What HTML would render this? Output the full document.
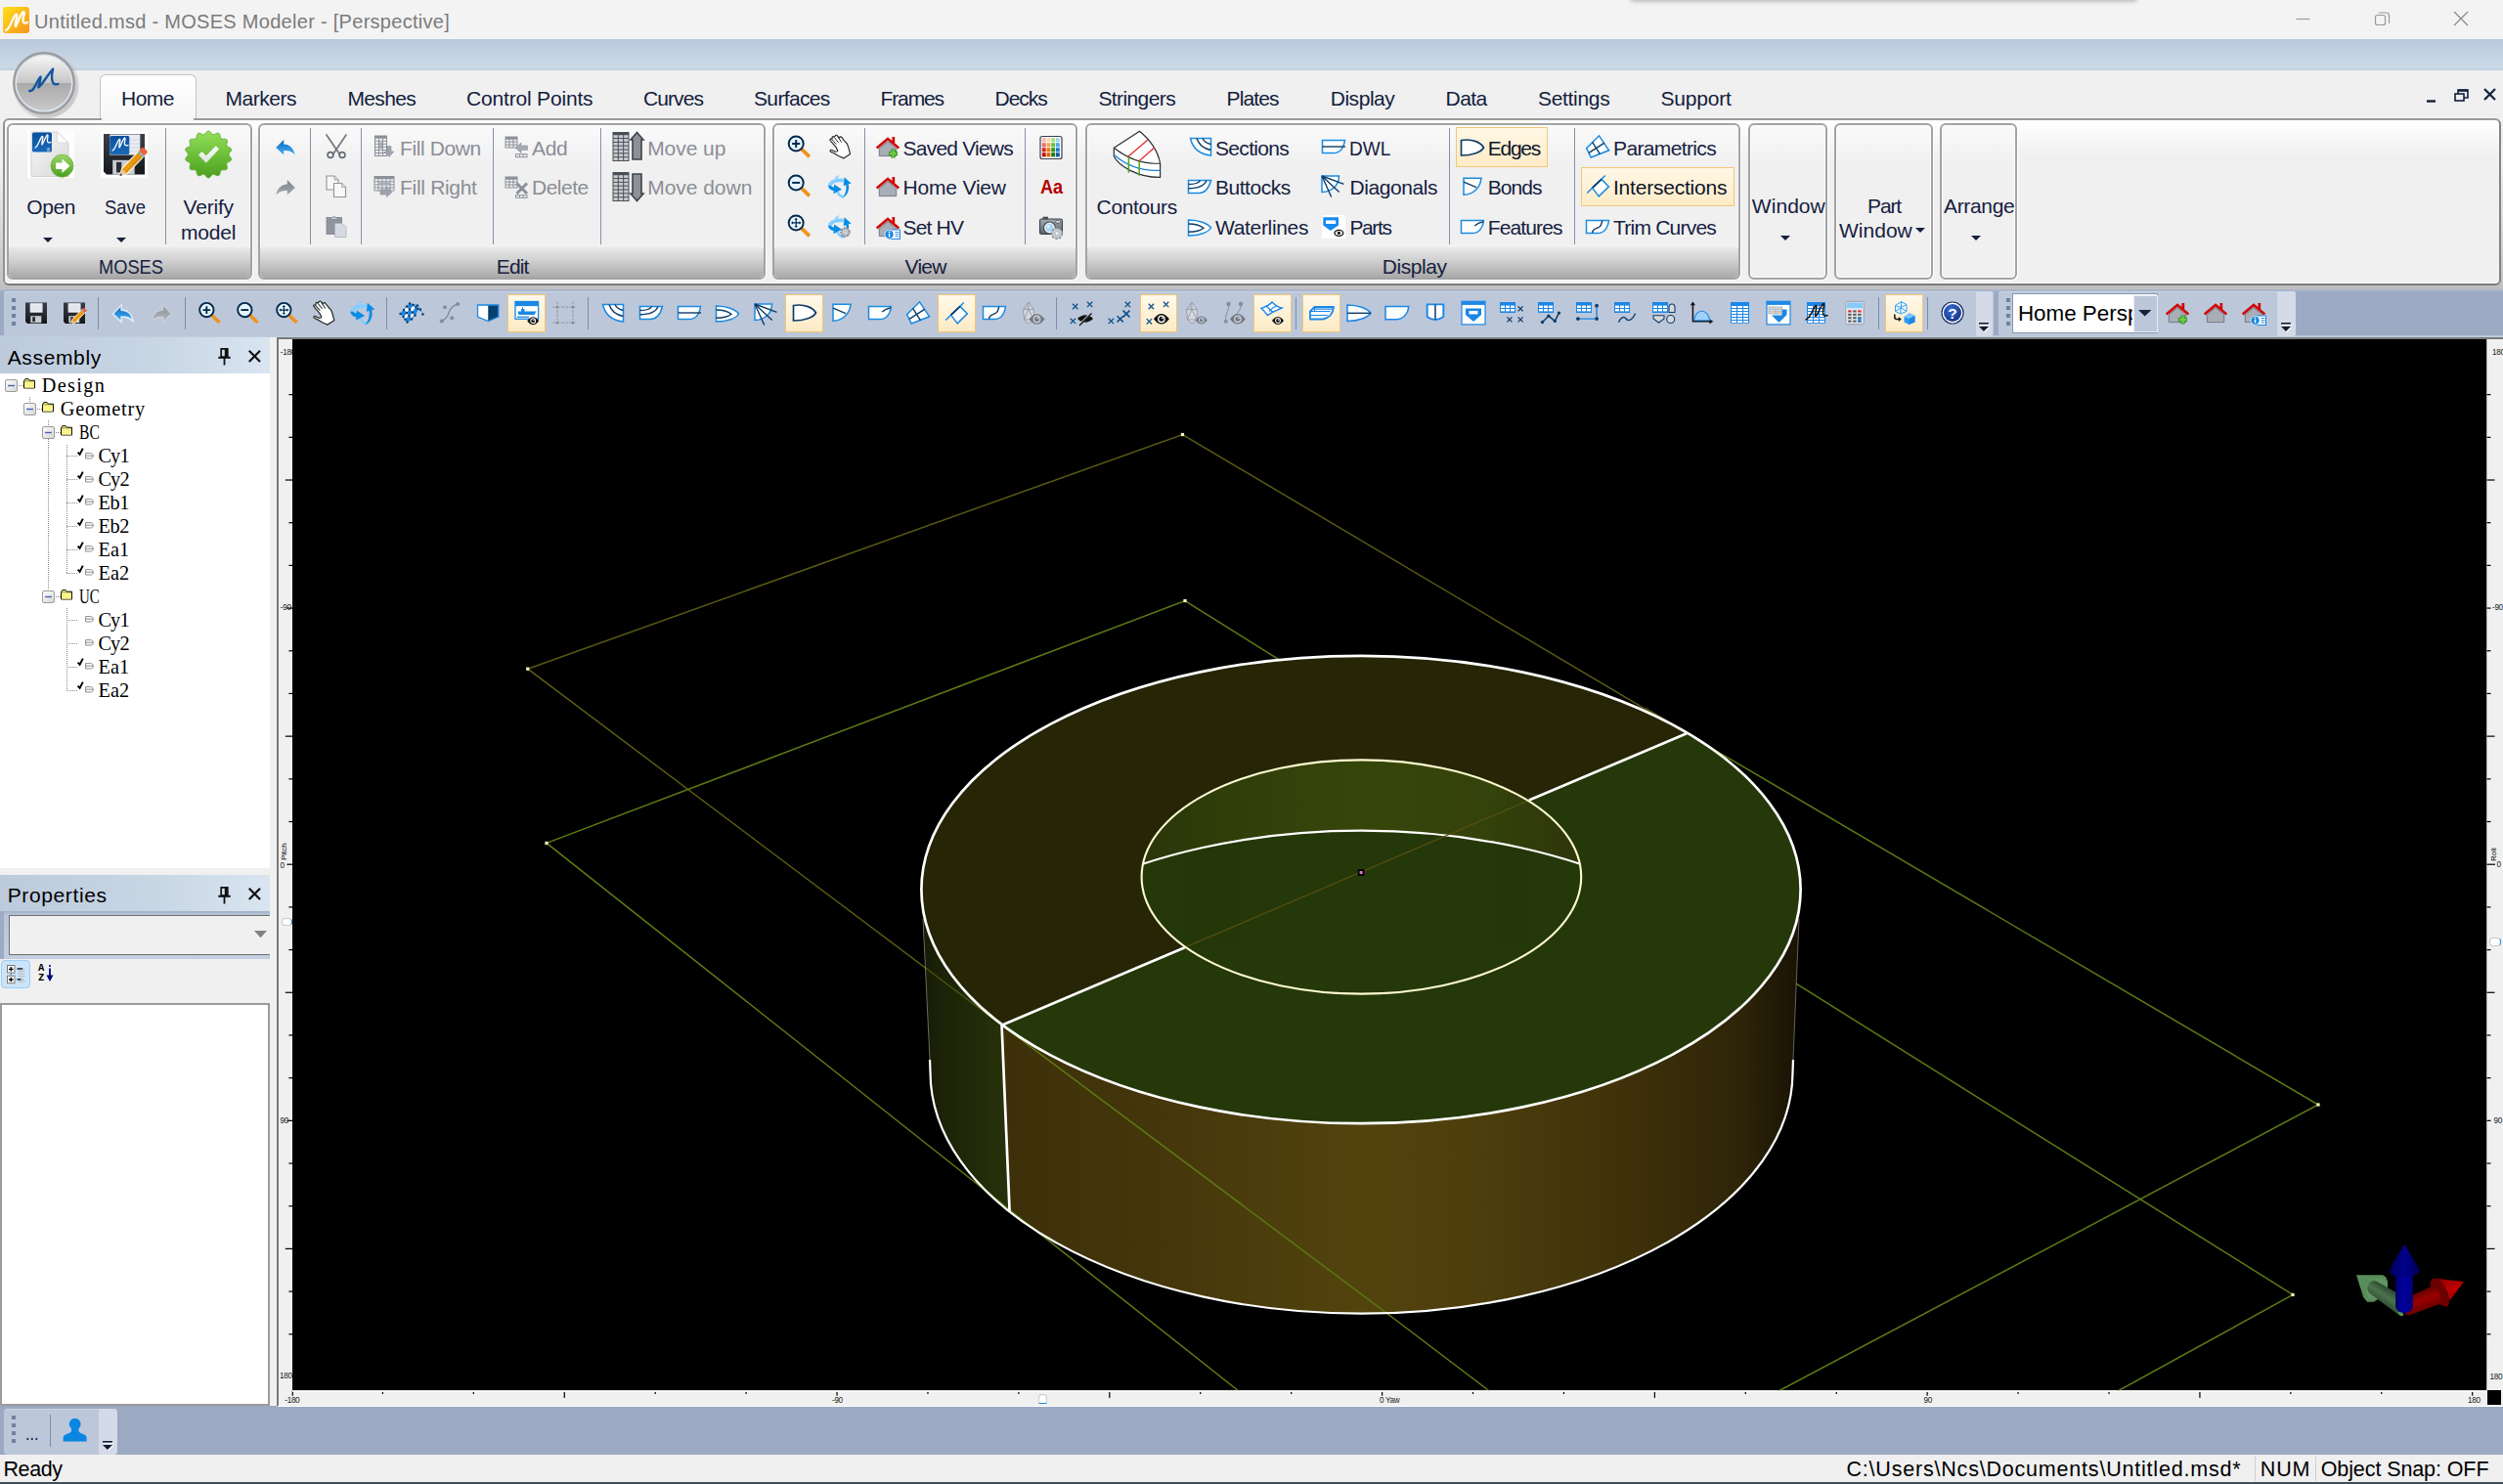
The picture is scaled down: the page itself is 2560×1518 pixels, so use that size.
<!DOCTYPE html>
<html><head><meta charset="utf-8"><title>Untitled.msd - MOSES Modeler - [Perspective]</title>
<style>
html,body{margin:0;padding:0}
html{overflow:hidden}
body{width:2560px;height:1518px;position:relative;overflow:hidden;background:#f0f0f0;font-family:"Liberation Sans",sans-serif}
.t{position:absolute;white-space:pre;display:block}
svg{overflow:visible}
</style></head><body>
<div style="position:absolute;left:0px;top:0px;width:2560px;height:40px;background:#f3f3f3"></div>
<svg style="position:absolute;left:3px;top:7px;" width="27" height="27" viewBox="0 0 27 27"><defs><linearGradient id="gico" x1="0" y1="0" x2="1" y2="1"><stop offset="0" stop-color="#ffe11a"/><stop offset="1" stop-color="#f7941d"/></linearGradient></defs>
<rect x="0" y="0" width="27" height="27" rx="3" fill="url(#gico)"/>
<path d="M3 24 C8 22 9 12 13 8 C14 7 15 8 14 11 C13 15 12 19 13 20 C15 18 17 8 21 5 C22 5 22 7 21 10 C20 14 20 18 25 16" fill="none" stroke="#fff" stroke-width="2.2" stroke-linecap="round"/></svg>
<span class="t" style="left:35.00px;top:11.67px;font-size:20px;line-height:20px;color:#7b7b7b;letter-spacing:0.290px;">Untitled.msd - MOSES Modeler - [Perspective]</span>
<div style="position:absolute;left:1668px;top:-12px;width:517px;height:12px;box-shadow:0 1px 5px rgba(0,0,0,.3)"></div>
<svg style="position:absolute;left:2340px;top:0px;" width="220" height="40" viewBox="0 0 220 40"><path d="M8.5 19.5h14" stroke="#9a9a9a" stroke-width="1.2" fill="none"/>
<rect x="89.5" y="15.5" width="10" height="10" rx="2" fill="none" stroke="#9a9a9a" stroke-width="1.2"/><path d="M92.5 13 h8 a3 3 0 0 1 3 3 v8" fill="none" stroke="#9a9a9a" stroke-width="1.2"/>
<path d="M170 12 l14 14 M184 12 l-14 14" stroke="#8a8a8a" stroke-width="1.3" fill="none"/></svg>
<div style="position:absolute;left:0px;top:40px;width:2560px;height:32.5px;background:linear-gradient(#b9c8db,#ccd9e7 88%,#b9c9dc)"></div>
<div style="position:absolute;left:0px;top:72px;width:2560px;height:49px;background:#f0f0f0"></div>
<div style="position:absolute;left:102px;top:76px;width:97px;height:46px;background:linear-gradient(#ffffff,#f6f6f6);border:1.5px solid #c4c4c4;border-bottom:none;border-radius:6px 6px 0 0"></div>
<span class="t" style="left:124.00px;top:90.22px;font-size:21px;line-height:21px;color:#12203c;letter-spacing:-0.491px;">Home</span>
<span class="t" style="left:230.60px;top:90.22px;font-size:21px;line-height:21px;color:#12203c;letter-spacing:-0.499px;">Markers</span>
<span class="t" style="left:355.40px;top:90.22px;font-size:21px;line-height:21px;color:#12203c;letter-spacing:-0.624px;">Meshes</span>
<span class="t" style="left:477.00px;top:90.22px;font-size:21px;line-height:21px;color:#12203c;letter-spacing:-0.178px;">Control Points</span>
<span class="t" style="left:658.00px;top:90.22px;font-size:21px;line-height:21px;color:#12203c;letter-spacing:-0.913px;">Curves</span>
<span class="t" style="left:771.00px;top:90.22px;font-size:21px;line-height:21px;color:#12203c;letter-spacing:-0.650px;">Surfaces</span>
<span class="t" style="left:900.50px;top:90.22px;font-size:21px;line-height:21px;color:#12203c;letter-spacing:-1.123px;">Frames</span>
<span class="t" style="left:1017.60px;top:90.22px;font-size:21px;line-height:21px;color:#12203c;letter-spacing:-1.032px;">Decks</span>
<span class="t" style="left:1123.40px;top:90.22px;font-size:21px;line-height:21px;color:#12203c;letter-spacing:-0.592px;">Stringers</span>
<span class="t" style="left:1254.60px;top:90.22px;font-size:21px;line-height:21px;color:#12203c;letter-spacing:-0.867px;">Plates</span>
<span class="t" style="left:1360.70px;top:90.22px;font-size:21px;line-height:21px;color:#12203c;letter-spacing:-0.455px;">Display</span>
<span class="t" style="left:1478.60px;top:90.22px;font-size:21px;line-height:21px;color:#12203c;letter-spacing:-0.560px;">Data</span>
<span class="t" style="left:1573.00px;top:90.22px;font-size:21px;line-height:21px;color:#12203c;letter-spacing:-0.317px;">Settings</span>
<span class="t" style="left:1698.50px;top:90.22px;font-size:21px;line-height:21px;color:#12203c;letter-spacing:-0.193px;">Support</span>
<svg style="position:absolute;left:2470px;top:85px;" width="90" height="30" viewBox="0 0 90 30"><path d="M12 18.5h9" stroke="#12203c" stroke-width="2.4"/>
<rect x="41" y="11" width="9" height="7" fill="none" stroke="#12203c" stroke-width="1.6"/><path d="M44 11v-4h10v8h-4" fill="none" stroke="#12203c" stroke-width="1.6"/><path d="M44 7.6h10" stroke="#12203c" stroke-width="2.4"/>
<path d="M71 6l11 11M82 6l-11 11" stroke="#12203c" stroke-width="2.2"/></svg>
<svg style="position:absolute;left:9.299999999999997px;top:48.8px;" width="72" height="72" viewBox="0 0 72 72"><defs><linearGradient id="gab" x1="0" y1="0" x2="0" y2="1"><stop offset="0" stop-color="#f6f6f6"/><stop offset="0.5" stop-color="#c6c6c6"/><stop offset="0.5" stop-color="#a9a9a9"/><stop offset="1" stop-color="#c9c9c9"/></linearGradient>
<radialGradient id="gab2" cx="0.53" cy="0.54" r="0.5"><stop offset="0.86" stop-color="#000" stop-opacity="0.16"/><stop offset="1" stop-color="#000" stop-opacity="0"/></radialGradient></defs>
<circle cx="37" cy="37.5" r="35" fill="url(#gab2)"/>
<circle cx="36" cy="36" r="30.8" fill="#d9e2f1" stroke="#9c9c9c" stroke-width="2.4"/>
<circle cx="36" cy="36" r="28" fill="url(#gab)"/>
<g transform="translate(36,36)"><path d="M-14.9 7.9 C-10 9.5 -8 -2 -3.5 -6.5 C-3 -3 -5.5 1.5 -5.7 4.4 C-2 2 4 -9 9.2 -14.5 C7.5 -8 6.5 3.5 14.5 0.9" fill="none" stroke="#14569e" stroke-width="2.4" stroke-linecap="round" stroke-linejoin="round"/></g></svg>
<div style="position:absolute;left:0px;top:121px;width:2560px;height:175px;background:linear-gradient(#f0f0f0 0,#f0f0f0 50px,#c0c0c0 100%)"></div>
<div style="position:absolute;left:2.6px;top:121px;width:2551.4px;height:167px;border:2px solid #9a9a9a;border-color:#9a9a9a #838383 #7b7b7b #929292;border-radius:6px;background:linear-gradient(#ffffff 0px,#f0f0f0 38px,#f0f0f0);box-shadow:inset 0 -1.2px 0 #fff"></div>
<div style="position:absolute;left:103.5px;top:119px;width:94px;height:5px;background:#f6f6f6"></div>
<div style="position:absolute;left:7px;top:126px;width:247px;height:155.5px;border:2px solid #a3a3a3;border-radius:6px;background:linear-gradient(#fafafa 0px,#f0f0f0 40px,#f0f0f0);box-shadow:inset 0 0 0 1px rgba(255,255,255,.8), 1px 1px 0 rgba(255,255,255,.9);overflow:hidden"><div style="position:absolute;left:0;right:0;bottom:0;height:31px;background:linear-gradient(#e9e9e9,#cfcfcf 45%,#a9a9a9);border-radius:0 0 4px 4px"></div></div>
<span class="t" style="left:101.00px;top:261.72px;font-size:21px;line-height:21px;color:#16213f;transform-origin:0 0;transform:scaleX(0.8701);">MOSES</span>
<div style="position:absolute;left:264px;top:126px;width:515px;height:155.5px;border:2px solid #a3a3a3;border-radius:6px;background:linear-gradient(#fafafa 0px,#f0f0f0 40px,#f0f0f0);box-shadow:inset 0 0 0 1px rgba(255,255,255,.8), 1px 1px 0 rgba(255,255,255,.9);overflow:hidden"><div style="position:absolute;left:0;right:0;bottom:0;height:31px;background:linear-gradient(#e9e9e9,#cfcfcf 45%,#a9a9a9);border-radius:0 0 4px 4px"></div></div>
<span class="t" style="left:507.80px;top:261.72px;font-size:21px;line-height:21px;color:#16213f;letter-spacing:-0.854px;">Edit</span>
<div style="position:absolute;left:790px;top:126px;width:308px;height:155.5px;border:2px solid #a3a3a3;border-radius:6px;background:linear-gradient(#fafafa 0px,#f0f0f0 40px,#f0f0f0);box-shadow:inset 0 0 0 1px rgba(255,255,255,.8), 1px 1px 0 rgba(255,255,255,.9);overflow:hidden"><div style="position:absolute;left:0;right:0;bottom:0;height:31px;background:linear-gradient(#e9e9e9,#cfcfcf 45%,#a9a9a9);border-radius:0 0 4px 4px"></div></div>
<span class="t" style="left:925.60px;top:261.72px;font-size:21px;line-height:21px;color:#16213f;letter-spacing:-0.783px;">View</span>
<div style="position:absolute;left:1110px;top:126px;width:666px;height:155.5px;border:2px solid #a3a3a3;border-radius:6px;background:linear-gradient(#fafafa 0px,#f0f0f0 40px,#f0f0f0);box-shadow:inset 0 0 0 1px rgba(255,255,255,.8), 1px 1px 0 rgba(255,255,255,.9);overflow:hidden"><div style="position:absolute;left:0;right:0;bottom:0;height:31px;background:linear-gradient(#e9e9e9,#cfcfcf 45%,#a9a9a9);border-radius:0 0 4px 4px"></div></div>
<span class="t" style="left:1413.80px;top:261.72px;font-size:21px;line-height:21px;color:#16213f;letter-spacing:-0.455px;">Display</span>
<div style="position:absolute;left:1788px;top:126px;width:77px;height:155.5px;border:2px solid #a3a3a3;border-radius:6px;background:linear-gradient(#fafafa 0px,#f0f0f0 40px,#f0f0f0);box-shadow:inset 0 0 0 1px rgba(255,255,255,.8), 1px 1px 0 rgba(255,255,255,.9);overflow:hidden"></div>
<div style="position:absolute;left:1876px;top:126px;width:97px;height:155.5px;border:2px solid #a3a3a3;border-radius:6px;background:linear-gradient(#fafafa 0px,#f0f0f0 40px,#f0f0f0);box-shadow:inset 0 0 0 1px rgba(255,255,255,.8), 1px 1px 0 rgba(255,255,255,.9);overflow:hidden"></div>
<div style="position:absolute;left:1984px;top:126px;width:75px;height:155.5px;border:2px solid #a3a3a3;border-radius:6px;background:linear-gradient(#fafafa 0px,#f0f0f0 40px,#f0f0f0);box-shadow:inset 0 0 0 1px rgba(255,255,255,.8), 1px 1px 0 rgba(255,255,255,.9);overflow:hidden"></div>
<div style="position:absolute;left:168.8px;top:130.5px;width:1.4px;height:119.0px;background:#8491a8"></div>
<div style="position:absolute;left:316.8px;top:130.5px;width:1.4px;height:119.0px;background:#8491a8"></div>
<div style="position:absolute;left:368.7px;top:130.5px;width:1.4px;height:119.0px;background:#8491a8"></div>
<div style="position:absolute;left:503.8px;top:130.5px;width:1.4px;height:119.0px;background:#8491a8"></div>
<div style="position:absolute;left:613.6999999999999px;top:130.5px;width:1.4px;height:119.0px;background:#8491a8"></div>
<div style="position:absolute;left:883.6999999999999px;top:130.5px;width:1.4px;height:119.0px;background:#8491a8"></div>
<div style="position:absolute;left:1047.7px;top:130.5px;width:1.4px;height:119.0px;background:#8491a8"></div>
<div style="position:absolute;left:1482.0px;top:130.5px;width:1.4px;height:119.0px;background:#8491a8"></div>
<div style="position:absolute;left:1609.7px;top:130.5px;width:1.4px;height:119.0px;background:#8491a8"></div>
<svg style="position:absolute;left:28px;top:134px;" width="48" height="48" viewBox="0 0 48 48"><defs><linearGradient id="gpg" x1="0" y1="0" x2="1" y2="1"><stop offset="0" stop-color="#f6f6f6"/><stop offset="1" stop-color="#d9d9d9"/></linearGradient>
<linearGradient id="gbl" x1="0" y1="0" x2="0" y2="1"><stop offset="0" stop-color="#0a4f9c"/><stop offset="1" stop-color="#1a6ab8"/></linearGradient>
<linearGradient id="ggr" x1="0" y1="0" x2="0" y2="1"><stop offset="0" stop-color="#9ad66a"/><stop offset="1" stop-color="#4c9f1e"/></linearGradient></defs>
<rect width="48" height="48" fill="#fdfdfd"/>
<path d="M4 1 H30.5 L42 12 V46.5 H4Z" fill="url(#gpg)" stroke="#c9c9c9" stroke-width="0.8"/><path d="M30.5 1 V12 H42Z" fill="#fbfbfb" stroke="#d0d0d0" stroke-width="0.6"/>
<rect x="5" y="1.5" width="20" height="20" rx="1.5" fill="url(#gbl)"/>
<path d="M8 17 C11 16 12.5 8 15 5.5 C16 5 16 6.5 15.5 8.5 C15 11 14.5 13.5 15 14 C16.5 13 18 6 20.5 4 C21.3 4 21 5.8 20.6 7.5 C20 10.5 20.5 13 24 11.5" fill="none" stroke="#fff" stroke-width="1.3" stroke-linecap="round"/><text x="20" y="20.5" font-size="5" fill="#cfe0f2" font-family="Liberation Sans,sans-serif">8</text>
<circle cx="35.5" cy="35.7" r="11.5" fill="url(#ggr)" stroke="#6fb544" stroke-width="0.8"/>
<path d="M29 32.5 H35.5 V28.5 L43.5 35.7 L35.5 43 V39 H29Z" fill="#fff"/></svg>
<span class="t" style="left:27.20px;top:200.82px;font-size:21px;line-height:21px;color:#16213f;letter-spacing:-0.364px;">Open</span>
<svg style="position:absolute;left:44.2px;top:242.7px;" width="10" height="5" viewBox="0 0 10 5"><path d="M0 0 H10 L5.0 5Z" fill="#16213f"/></svg>
<svg style="position:absolute;left:103px;top:134px;" width="48" height="48" viewBox="0 0 48 48"><defs><linearGradient id="gfl" x1="0" y1="0" x2="0" y2="1"><stop offset="0" stop-color="#3c404a"/><stop offset="1" stop-color="#15171c"/></linearGradient>
<linearGradient id="gpn" x1="0" y1="0" x2="1" y2="1"><stop offset="0" stop-color="#f8b822"/><stop offset="1" stop-color="#e08a0a"/></linearGradient></defs>
<rect width="48" height="48" fill="#fdfdfd"/>
<path d="M3 3 H45 V44.5 H6 L3 41.5Z" fill="url(#gfl)"/>
<rect x="9.3" y="3.5" width="31" height="21" fill="#e9ebf2"/><path d="M9.3 9h31M9.3 13h31M9.3 17h31M9.3 21h31" stroke="#d3d7e2" stroke-width="1"/>
<rect x="9.3" y="4.9" width="20" height="19.2" rx="1.5" fill="url(#gbl)"/>
<path d="M12 20 C15 19 16.5 11 19 8.5 C20 8 20 9.5 19.5 11.5 C19 14 18.5 16.5 19 17 C20.5 16 22 9 24.5 7 C25.3 7 25 8.8 24.6 10.5 C24 13.5 24.5 16 28 14.5" fill="none" stroke="#fff" stroke-width="1.3" stroke-linecap="round"/>
<rect x="12.2" y="29.8" width="22.5" height="14.7" fill="#c9cbd0"/><rect x="16" y="31.8" width="5.3" height="10.6" fill="#2b2e35"/>
<g transform="translate(19.4,46.1) rotate(-46)"><path d="M0 0 L7 -3.8 H33 V3.8 H7Z" fill="url(#gpn)" stroke="#fff" stroke-width="1"/><path d="M0 0 L7 -3.8 V3.8Z" fill="#e8c9a0"/><path d="M0 0 L2.6 -1.4 V1.4Z" fill="#333"/><rect x="30" y="-3.8" width="2.5" height="7.6" fill="#9aa"/><path d="M32.5 -3.8 H36 a2 2 0 0 1 2 2 V1.8 a2 2 0 0 1 -2 2 H32.5Z" fill="#e8643c"/><path d="M7 -1.2 H30 M7 1.4 H30" stroke="#c97a08" stroke-width="0.8"/></g></svg>
<span class="t" style="left:106.60px;top:200.82px;font-size:21px;line-height:21px;color:#16213f;transform-origin:0 0;transform:scaleX(0.8774);">Save</span>
<svg style="position:absolute;left:119.0px;top:242.7px;" width="10" height="5" viewBox="0 0 10 5"><path d="M0 0 H10 L5.0 5Z" fill="#16213f"/></svg>
<svg style="position:absolute;left:188.7px;top:134px;" width="48.5" height="48" viewBox="0 0 48.5 48"><defs><linearGradient id="gvf" x1="0" y1="0" x2="0" y2="1"><stop offset="0" stop-color="#93e05a"/><stop offset="1" stop-color="#4a9f1c"/></linearGradient><linearGradient id="gck" x1="0" y1="0" x2="0" y2="1"><stop offset="0" stop-color="#ffffff"/><stop offset="1" stop-color="#d9e4dc"/></linearGradient></defs>
<polygon points="24.20,-0.10 25.52,0.44 26.71,1.74 27.75,3.10 28.81,3.82 30.07,3.63 31.60,2.86 33.23,2.19 34.66,2.29 35.62,3.34 36.12,5.03 36.47,6.71 37.11,7.82 38.33,8.19 40.04,8.16 41.80,8.27 43.04,8.97 43.45,10.34 43.17,12.08 42.75,13.75 42.85,15.02 43.78,15.89 45.34,16.60 46.88,17.47 47.70,18.64 47.47,20.05 46.46,21.49 45.36,22.81 44.90,24.00 45.36,25.19 46.46,26.51 47.47,27.95 47.70,29.36 46.88,30.53 45.34,31.40 43.78,32.11 42.85,32.98 42.75,34.25 43.17,35.92 43.45,37.66 43.04,39.03 41.80,39.73 40.04,39.84 38.33,39.81 37.11,40.18 36.47,41.29 36.12,42.97 35.62,44.66 34.66,45.71 33.23,45.81 31.60,45.14 30.07,44.37 28.81,44.18 27.75,44.90 26.71,46.26 25.52,47.56 24.20,48.10 22.88,47.56 21.69,46.26 20.65,44.90 19.59,44.18 18.33,44.37 16.80,45.14 15.17,45.81 13.74,45.71 12.78,44.66 12.28,42.97 11.93,41.29 11.29,40.18 10.07,39.81 8.36,39.84 6.60,39.73 5.36,39.03 4.95,37.66 5.23,35.92 5.65,34.25 5.55,32.98 4.62,32.11 3.06,31.40 1.52,30.53 0.70,29.36 0.93,27.95 1.94,26.51 3.04,25.19 3.50,24.00 3.04,22.81 1.94,21.49 0.93,20.05 0.70,18.64 1.52,17.47 3.06,16.60 4.62,15.89 5.55,15.02 5.65,13.75 5.23,12.08 4.95,10.34 5.36,8.97 6.60,8.27 8.36,8.16 10.07,8.19 11.29,7.82 11.93,6.71 12.28,5.03 12.78,3.34 13.74,2.29 15.17,2.19 16.80,2.86 18.33,3.63 19.59,3.82 20.65,3.10 21.69,1.74 22.88,0.44" fill="url(#gvf)" stroke="#5aa832" stroke-width="0.8"/>
<path d="M14 24.5 L17.5 21 L21.8 25.3 L31.8 15.2 L35 18.4 L21.8 32.8Z" fill="url(#gck)"/></svg>
<span class="t" style="left:187.60px;top:200.82px;font-size:21px;line-height:21px;color:#16213f;letter-spacing:-0.204px;">Verify</span>
<span class="t" style="left:185.00px;top:227.02px;font-size:21px;line-height:21px;color:#16213f;letter-spacing:-0.177px;">model</span>
<svg style="position:absolute;left:277.3px;top:135.5px;" width="30" height="30" viewBox="0 0 30 30"><g transform="translate(15.0,15.0) scale(1.0)"><defs><linearGradient id="gu" x1="0" y1="0" x2="0" y2="1"><stop offset="0" stop-color="#0a63c0"/><stop offset="1" stop-color="#45b5f7"/></linearGradient></defs><path d="M-9.8 0 L-1.8 -8 L-1.8 -3.6 C4 -3.6 8.5 0.5 9.6 7.5 C6.5 3.5 3 2.6 -1.8 3 L-1.8 7.6Z" fill="url(#gu)"/></g></svg>
<svg style="position:absolute;left:276.6px;top:176.8px;" width="30" height="30" viewBox="0 0 30 30"><g transform="translate(15.0,15.0) scale(1.0)"><g transform="scale(-1,1)"><defs><linearGradient id="gr_" x1="0" y1="0" x2="0" y2="1"><stop offset="0" stop-color="#7e838e"/><stop offset="1" stop-color="#a4a8b0"/></linearGradient></defs><path d="M-9.8 0 L-1.8 -8 L-1.8 -3.6 C4 -3.6 8.5 0.5 9.6 7.5 C6.5 3.5 3 2.6 -1.8 3 L-1.8 7.6Z" fill="url(#gr_)"/></g></g></svg>
<svg style="position:absolute;left:328.5px;top:135.0px;" width="30" height="30" viewBox="0 0 30 30"><g transform="translate(15.0,15.0) scale(1.0)"><path d="M-10 -12 L3.5 8 M10 -12 L-3.5 8" stroke="#767c86" stroke-width="1.8" stroke-linecap="round"/><circle cx="-6" cy="8.5" r="2.9" fill="none" stroke="#666c76" stroke-width="1.7"/><circle cx="6" cy="8.5" r="2.9" fill="none" stroke="#666c76" stroke-width="1.7"/></g></svg>
<svg style="position:absolute;left:329.0px;top:176.0px;" width="30" height="30" viewBox="0 0 30 30"><g transform="translate(15.0,15.0) scale(1.0)"><g transform="translate(-10,-11)"><path d="M0 0 H8 L12 4 V14 H0Z" fill="#f8f8f8" stroke="#8f949c" stroke-width="1.1"/><path d="M8 0 V4 H12" fill="#ddd" stroke="#9a9ea6" stroke-width="0.8"/></g><g transform="translate(-2.5,-3.5)"><path d="M0 0 H8 L12 4 V14 H0Z" fill="#f8f8f8" stroke="#8f949c" stroke-width="1.1"/><path d="M8 0 V4 H12" fill="#ddd" stroke="#9a9ea6" stroke-width="0.8"/></g></g></svg>
<svg style="position:absolute;left:329.0px;top:217.0px;" width="30" height="30" viewBox="0 0 30 30"><g transform="translate(15.0,15.0) scale(1.0)"><rect x="-10" y="-9.5" width="15.5" height="17" fill="#8f949e" stroke="#7b808a" stroke-width="0.8"/><path d="M-6.5 -7.5 h8.5 l-1.5 -2 h-1.5 l-1.2 -1.6 l-1.2 1.6 h-1.6z" fill="#c6cad2" stroke="#7b808a" stroke-width="0.7"/><path d="M-1.5 -3.5 H6 L10 0.5 V10.5 H-1.5Z" fill="#d5dae3" stroke="#aab0bb" stroke-width="0.8"/></g></svg>
<svg style="position:absolute;left:378.0px;top:134.5px;" width="30" height="30" viewBox="0 0 30 30"><g transform="translate(15.0,15.0) scale(1.0)"><rect x="-10" y="-11.5" width="13" height="21.5" fill="#8b909a"/><rect x="-9.00" y="-8.30" width="3.00" height="2.05" fill="#f2f2f2"/><rect x="-5.00" y="-8.30" width="3.00" height="2.05" fill="#f2f2f2"/><rect x="-1.00" y="-8.30" width="3.00" height="2.05" fill="#f2f2f2"/><rect x="-9.00" y="-5.25" width="3.00" height="2.05" fill="#f2f2f2"/><rect x="-5.00" y="-5.25" width="3.00" height="2.05" fill="#f2f2f2"/><rect x="-1.00" y="-5.25" width="3.00" height="2.05" fill="#f2f2f2"/><rect x="-9.00" y="-2.20" width="3.00" height="2.05" fill="#f2f2f2"/><rect x="-5.00" y="-2.20" width="3.00" height="2.05" fill="#f2f2f2"/><rect x="-1.00" y="-2.20" width="3.00" height="2.05" fill="#f2f2f2"/><rect x="-9.00" y="0.85" width="3.00" height="2.05" fill="#f2f2f2"/><rect x="-5.00" y="0.85" width="3.00" height="2.05" fill="#f2f2f2"/><rect x="-1.00" y="0.85" width="3.00" height="2.05" fill="#f2f2f2"/><rect x="-9.00" y="3.90" width="3.00" height="2.05" fill="#f2f2f2"/><rect x="-5.00" y="3.90" width="3.00" height="2.05" fill="#f2f2f2"/><rect x="-1.00" y="3.90" width="3.00" height="2.05" fill="#f2f2f2"/><rect x="-9.00" y="6.95" width="3.00" height="2.05" fill="#f2f2f2"/><rect x="-5.00" y="6.95" width="3.00" height="2.05" fill="#f2f2f2"/><rect x="-1.00" y="6.95" width="3.00" height="2.05" fill="#f2f2f2"/><rect x="-4.8" y="-4.5" width="3" height="6.5" fill="#a6aab2"/><path d="M3 -0.5 H7 V5 H9.8 L5 10.5 L0.2 5 H3Z" fill="#9ea3ac" stroke="#8b909a" stroke-width="0.6"/></g></svg>
<svg style="position:absolute;left:377.5px;top:175.5px;" width="30" height="30" viewBox="0 0 30 30"><g transform="translate(15.0,15.0) scale(1.0)"><rect x="-10.5" y="-11" width="21" height="15.5" fill="#8b909a"/><rect x="-9.50" y="-7.80" width="3.00" height="2.08" fill="#f2f2f2"/><rect x="-5.50" y="-7.80" width="3.00" height="2.08" fill="#f2f2f2"/><rect x="-1.50" y="-7.80" width="3.00" height="2.08" fill="#f2f2f2"/><rect x="2.50" y="-7.80" width="3.00" height="2.08" fill="#f2f2f2"/><rect x="6.50" y="-7.80" width="3.00" height="2.08" fill="#f2f2f2"/><rect x="-9.50" y="-4.72" width="3.00" height="2.08" fill="#f2f2f2"/><rect x="-5.50" y="-4.72" width="3.00" height="2.08" fill="#f2f2f2"/><rect x="-1.50" y="-4.72" width="3.00" height="2.08" fill="#f2f2f2"/><rect x="2.50" y="-4.72" width="3.00" height="2.08" fill="#f2f2f2"/><rect x="6.50" y="-4.72" width="3.00" height="2.08" fill="#f2f2f2"/><rect x="-9.50" y="-1.65" width="3.00" height="2.08" fill="#f2f2f2"/><rect x="-5.50" y="-1.65" width="3.00" height="2.08" fill="#f2f2f2"/><rect x="-1.50" y="-1.65" width="3.00" height="2.08" fill="#f2f2f2"/><rect x="2.50" y="-1.65" width="3.00" height="2.08" fill="#f2f2f2"/><rect x="6.50" y="-1.65" width="3.00" height="2.08" fill="#f2f2f2"/><rect x="-9.50" y="1.43" width="3.00" height="2.08" fill="#f2f2f2"/><rect x="-5.50" y="1.43" width="3.00" height="2.08" fill="#f2f2f2"/><rect x="-1.50" y="1.43" width="3.00" height="2.08" fill="#f2f2f2"/><rect x="2.50" y="1.43" width="3.00" height="2.08" fill="#f2f2f2"/><rect x="6.50" y="1.43" width="3.00" height="2.08" fill="#f2f2f2"/><rect x="-5.5" y="-4.4" width="11" height="2.5" fill="#a6aab2"/><path d="M-4 2.8 H2.5 V0.2 L8 5.5 L2.5 10.6 V8 H-4Z" fill="#9ea3ac" stroke="#8b909a" stroke-width="0.6"/></g></svg>
<span class="t" style="left:409.00px;top:140.72px;font-size:21px;line-height:21px;color:#8b8e95;letter-spacing:-0.394px;">Fill Down</span>
<span class="t" style="left:409.00px;top:181.42px;font-size:21px;line-height:21px;color:#8b8e95;letter-spacing:-0.304px;">Fill Right</span>
<svg style="position:absolute;left:512.7px;top:134.5px;" width="30" height="30" viewBox="0 0 30 30"><g transform="translate(15.0,15.0) scale(1.0)"><rect x="-11.5" y="-10.5" width="13" height="12" fill="#8b909a"/><rect x="-10.50" y="-7.30" width="3.00" height="1.93" fill="#f2f2f2"/><rect x="-6.50" y="-7.30" width="3.00" height="1.93" fill="#f2f2f2"/><rect x="-2.50" y="-7.30" width="3.00" height="1.93" fill="#f2f2f2"/><rect x="-10.50" y="-4.37" width="3.00" height="1.93" fill="#f2f2f2"/><rect x="-6.50" y="-4.37" width="3.00" height="1.93" fill="#f2f2f2"/><rect x="-2.50" y="-4.37" width="3.00" height="1.93" fill="#f2f2f2"/><rect x="-10.50" y="-1.43" width="3.00" height="1.93" fill="#f2f2f2"/><rect x="-6.50" y="-1.43" width="3.00" height="1.93" fill="#f2f2f2"/><rect x="-2.50" y="-1.43" width="3.00" height="1.93" fill="#f2f2f2"/><path d="M11.5 -1 H5 V-4 L-1 1.2 L5 6.4 V3.4 H11.5Z" fill="#a6aab2" stroke="#8b909a" stroke-width="0.6"/><rect x="-1" y="7.2" width="12.5" height="4" fill="#8b909a"/><rect x="0.00" y="8.20" width="2.83" height="2.00" fill="#f2f2f2"/><rect x="3.83" y="8.20" width="2.83" height="2.00" fill="#f2f2f2"/><rect x="7.67" y="8.20" width="2.83" height="2.00" fill="#f2f2f2"/></g></svg>
<svg style="position:absolute;left:512.7px;top:175.5px;" width="30" height="30" viewBox="0 0 30 30"><g transform="translate(15.0,15.0) scale(1.0)"><rect x="-11.5" y="-10.5" width="13" height="12" fill="#8b909a"/><rect x="-10.50" y="-7.30" width="3.00" height="1.93" fill="#f2f2f2"/><rect x="-6.50" y="-7.30" width="3.00" height="1.93" fill="#f2f2f2"/><rect x="-2.50" y="-7.30" width="3.00" height="1.93" fill="#f2f2f2"/><rect x="-10.50" y="-4.37" width="3.00" height="1.93" fill="#f2f2f2"/><rect x="-6.50" y="-4.37" width="3.00" height="1.93" fill="#f2f2f2"/><rect x="-2.50" y="-4.37" width="3.00" height="1.93" fill="#f2f2f2"/><rect x="-10.50" y="-1.43" width="3.00" height="1.93" fill="#f2f2f2"/><rect x="-6.50" y="-1.43" width="3.00" height="1.93" fill="#f2f2f2"/><rect x="-2.50" y="-1.43" width="3.00" height="1.93" fill="#f2f2f2"/><path d="M0.5 -3.5 L11 7 M11 -3.5 L0.5 7" stroke="#8b909a" stroke-width="3"/><rect x="-1" y="8.2" width="12.5" height="3.6" fill="#8b909a"/><rect x="0.00" y="9.20" width="2.83" height="1.60" fill="#f2f2f2"/><rect x="3.83" y="9.20" width="2.83" height="1.60" fill="#f2f2f2"/><rect x="7.67" y="9.20" width="2.83" height="1.60" fill="#f2f2f2"/></g></svg>
<span class="t" style="left:544.00px;top:140.72px;font-size:21px;line-height:21px;color:#8b8e95;letter-spacing:-0.347px;">Add</span>
<span class="t" style="left:544.00px;top:181.42px;font-size:21px;line-height:21px;color:#8b8e95;letter-spacing:-0.492px;">Delete</span>
<svg style="position:absolute;left:623.5px;top:131.8px;" width="36" height="36" viewBox="0 0 36 36"><g transform="translate(18.0,18.0) scale(1.0)"><rect x="-15.5" y="-15" width="17" height="30" fill="#4a4e55"/><rect x="-14.50" y="-11.80" width="4.33" height="2.83" fill="#c9ccd1"/><rect x="-9.17" y="-11.80" width="4.33" height="2.83" fill="#c9ccd1"/><rect x="-3.83" y="-11.80" width="4.33" height="2.83" fill="#c9ccd1"/><rect x="-14.50" y="-7.97" width="4.33" height="2.83" fill="#c9ccd1"/><rect x="-9.17" y="-7.97" width="4.33" height="2.83" fill="#c9ccd1"/><rect x="-3.83" y="-7.97" width="4.33" height="2.83" fill="#c9ccd1"/><rect x="-14.50" y="-4.14" width="4.33" height="2.83" fill="#c9ccd1"/><rect x="-9.17" y="-4.14" width="4.33" height="2.83" fill="#c9ccd1"/><rect x="-3.83" y="-4.14" width="4.33" height="2.83" fill="#c9ccd1"/><rect x="-14.50" y="-0.31" width="4.33" height="2.83" fill="#c9ccd1"/><rect x="-9.17" y="-0.31" width="4.33" height="2.83" fill="#c9ccd1"/><rect x="-3.83" y="-0.31" width="4.33" height="2.83" fill="#c9ccd1"/><rect x="-14.50" y="3.51" width="4.33" height="2.83" fill="#c9ccd1"/><rect x="-9.17" y="3.51" width="4.33" height="2.83" fill="#c9ccd1"/><rect x="-3.83" y="3.51" width="4.33" height="2.83" fill="#c9ccd1"/><rect x="-14.50" y="7.34" width="4.33" height="2.83" fill="#c9ccd1"/><rect x="-9.17" y="7.34" width="4.33" height="2.83" fill="#c9ccd1"/><rect x="-3.83" y="7.34" width="4.33" height="2.83" fill="#c9ccd1"/><rect x="-14.50" y="11.17" width="4.33" height="2.83" fill="#c9ccd1"/><rect x="-9.17" y="11.17" width="4.33" height="2.83" fill="#c9ccd1"/><rect x="-3.83" y="11.17" width="4.33" height="2.83" fill="#c9ccd1"/><path d="M5 13 V-7 L3 -7 L9.5 -14.5 L16 -7 L14 -7 V13Z" fill="#8d9199" stroke="#3f434a" stroke-width="1.6"/></g></svg>
<svg style="position:absolute;left:623.5px;top:172.8px;" width="36" height="36" viewBox="0 0 36 36"><g transform="translate(18.0,18.0) scale(1.0)"><rect x="-15.5" y="-15" width="17" height="30" fill="#4a4e55"/><rect x="-14.50" y="-11.80" width="4.33" height="2.83" fill="#c9ccd1"/><rect x="-9.17" y="-11.80" width="4.33" height="2.83" fill="#c9ccd1"/><rect x="-3.83" y="-11.80" width="4.33" height="2.83" fill="#c9ccd1"/><rect x="-14.50" y="-7.97" width="4.33" height="2.83" fill="#c9ccd1"/><rect x="-9.17" y="-7.97" width="4.33" height="2.83" fill="#c9ccd1"/><rect x="-3.83" y="-7.97" width="4.33" height="2.83" fill="#c9ccd1"/><rect x="-14.50" y="-4.14" width="4.33" height="2.83" fill="#c9ccd1"/><rect x="-9.17" y="-4.14" width="4.33" height="2.83" fill="#c9ccd1"/><rect x="-3.83" y="-4.14" width="4.33" height="2.83" fill="#c9ccd1"/><rect x="-14.50" y="-0.31" width="4.33" height="2.83" fill="#c9ccd1"/><rect x="-9.17" y="-0.31" width="4.33" height="2.83" fill="#c9ccd1"/><rect x="-3.83" y="-0.31" width="4.33" height="2.83" fill="#c9ccd1"/><rect x="-14.50" y="3.51" width="4.33" height="2.83" fill="#c9ccd1"/><rect x="-9.17" y="3.51" width="4.33" height="2.83" fill="#c9ccd1"/><rect x="-3.83" y="3.51" width="4.33" height="2.83" fill="#c9ccd1"/><rect x="-14.50" y="7.34" width="4.33" height="2.83" fill="#c9ccd1"/><rect x="-9.17" y="7.34" width="4.33" height="2.83" fill="#c9ccd1"/><rect x="-3.83" y="7.34" width="4.33" height="2.83" fill="#c9ccd1"/><rect x="-14.50" y="11.17" width="4.33" height="2.83" fill="#c9ccd1"/><rect x="-9.17" y="11.17" width="4.33" height="2.83" fill="#c9ccd1"/><rect x="-3.83" y="11.17" width="4.33" height="2.83" fill="#c9ccd1"/><g transform="scale(1,-1)"><path d="M5 13 V-7 L3 -7 L9.5 -14.5 L16 -7 L14 -7 V13Z" fill="#8d9199" stroke="#3f434a" stroke-width="1.6"/></g></g></svg>
<span class="t" style="left:662.20px;top:140.72px;font-size:21px;line-height:21px;color:#8b8e95;letter-spacing:-0.069px;">Move up</span>
<span class="t" style="left:662.20px;top:181.42px;font-size:21px;line-height:21px;color:#8b8e95;letter-spacing:-0.034px;">Move down</span>
<svg style="position:absolute;left:803.3px;top:135.5px;" width="30" height="30" viewBox="0 0 30 30"><g transform="translate(15.0,15.0) scale(1.0)"><path d="M1.6 1.4 L9.9 9.4" stroke="#f0921e" stroke-width="3.7"/><circle cx="-3.8" cy="-4.1" r="7.5" fill="#e6f4fd" stroke="#00284a" stroke-width="1.95"/><path d="M-7.8 -4.1 H0.2 M-3.8 -8.1 V-0.1" stroke="#00284a" stroke-width="1.95"/></g></svg>
<svg style="position:absolute;left:803.3px;top:176.4px;" width="30" height="30" viewBox="0 0 30 30"><g transform="translate(15.0,15.0) scale(1.0)"><path d="M1.6 1.4 L9.9 9.4" stroke="#f0921e" stroke-width="3.7"/><circle cx="-3.8" cy="-4.1" r="7.5" fill="#e6f4fd" stroke="#00284a" stroke-width="1.95"/><path d="M-7.8 -4.1 H0.2" stroke="#00284a" stroke-width="1.95"/></g></svg>
<svg style="position:absolute;left:803.3px;top:217.3px;" width="30" height="30" viewBox="0 0 30 30"><g transform="translate(15.0,15.0) scale(1.0)"><path d="M1.6 1.4 L9.9 9.4" stroke="#f0921e" stroke-width="3.7"/><circle cx="-3.8" cy="-4.1" r="7.5" fill="#e6f4fd" stroke="#00284a" stroke-width="1.95"/><path d="M-8 -4.1 H0.4 M-3.8 -8.3 V0.1" stroke="#00284a" stroke-width="1.2"/><path d="M-9 -4.1 l2 -1.7 v3.4z M1.4 -4.1 l-2 -1.7 v3.4z M-3.8 -9.3 l-1.7 2 h3.4z M-3.8 1.1 l-1.7 -2 h3.4z" fill="#00284a"/></g></svg>
<svg style="position:absolute;left:843.6px;top:135.0px;" width="30" height="30" viewBox="0 0 30 30"><g transform="translate(15.0,15.0) scale(1.0)"><path d="M-9.9 -6.4 C-10.6 -7.7 -9.3 -8.5 -8.3 -7.6 L-7.8 -8.4 C-8.3 -10.2 -6.9 -10.9 -6 -9.8 L-5 -10.4 C-4.8 -12 -3 -12.2 -2.4 -10.9 L-0.6 -8.8 C-0.3 -10.6 1.4 -10.6 2 -9.3 L4.2 -6.4 L7.4 -2.8 C8.5 -1 9.2 1.9 10.6 7.6 L3.8 11.9 L-0.9 9.8 L-6.6 6.5 L-9.4 5.2 C-10.6 4.4 -9.6 3 -8.4 3.5 L-4.5 5.2 C-3 5.4 -2 4.6 -2.3 3.7 L-4.1 0.4Z" fill="#fff" stroke="#2a2a2a" stroke-width="1.2" stroke-linejoin="round"/><path d="M-8 -7.2 L-3.6 -2.4 M-5.6 -9.3 L-1.4 -4.2 M-2 -10 L1.7 -4.4" fill="none" stroke="#2a2a2a" stroke-width="1"/></g></svg>
<svg style="position:absolute;left:843.6px;top:176.0px;" width="30" height="30" viewBox="0 0 30 30"><g transform="translate(15.0,15.0) scale(1.0)"><path d="M-11.9 -1.5 C-11 -7 -4 -9 3.9 -8.3 L3.9 -4.6 C-3 -5.2 -7.5 -3.8 -8.4 -1Z" fill="#82cfff"/><path d="M-5.4 -7.9 C-4.5 -10 -2.5 -11.4 0.2 -11.8 C-1.5 -10.5 -2.3 -9.5 -2.6 -8.2Z" fill="#82cfff"/><path d="M-3.8 5.2 C-2.5 9 0.5 11 3 11.6 L4 9.4 C1.5 9 -0.3 7.3 -1.5 4.6Z" fill="#82cfff"/><path d="M-11.9 -1.5 C-12 1 -10.5 3 -6.3 4.2 L-6.5 7.2 L2 2.8 L-5.8 -2.5 L-6.1 0.4 C-8.5 0 -9.5 -0.8 -8.4 -1Z" fill="#0a8de6"/><path d="M4.6 -9.7 L11.8 -3.3 L8.8 -2.9 C10.2 3.5 7.5 10 2.1 11.8 C5.5 8.5 6.8 3.5 6.4 -1.8 L3.7 -1.1Z" fill="#0a8de6"/></g></svg>
<svg style="position:absolute;left:843.6px;top:217.0px;" width="30" height="30" viewBox="0 0 30 30"><g transform="translate(15.0,15.0) scale(1.0)"><path d="M-11.9 -1.5 C-11 -7 -4 -9 3.9 -8.3 L3.9 -4.6 C-3 -5.2 -7.5 -3.8 -8.4 -1Z" fill="#82cfff"/><path d="M-5.4 -7.9 C-4.5 -10 -2.5 -11.4 0.2 -11.8 C-1.5 -10.5 -2.3 -9.5 -2.6 -8.2Z" fill="#82cfff"/><path d="M-3.8 5.2 C-2.5 9 0.5 11 3 11.6 L4 9.4 C1.5 9 -0.3 7.3 -1.5 4.6Z" fill="#82cfff"/><path d="M-11.9 -1.5 C-12 1 -10.5 3 -6.3 4.2 L-6.5 7.2 L2 2.8 L-5.8 -2.5 L-6.1 0.4 C-8.5 0 -9.5 -0.8 -8.4 -1Z" fill="#0a8de6"/><path d="M4.6 -9.7 L11.8 -3.3 L8.8 -2.9 C10.2 3.5 7.5 10 2.1 11.8 C5.5 8.5 6.8 3.5 6.4 -1.8 L3.7 -1.1Z" fill="#0a8de6"/><g transform="translate(5.5,5.5)"><circle r="4.6" fill="#cfd3da" stroke="#7b808a" stroke-width="1.2" stroke-dasharray="2 1.2"/><circle r="3.4" fill="#d9dce2" stroke="#8a8f99" stroke-width="0.8"/><circle r="1.5" fill="#f2f2f2" stroke="#8a8f99" stroke-width="0.7"/></g></g></svg>
<svg style="position:absolute;left:893.0px;top:135.0px;" width="30" height="30" viewBox="0 0 30 30"><g transform="translate(15.0,15.0) scale(1.0)"><path d="M-8.7 2 L0 -5.4 L8.7 2 V9.6 H-8.7Z" fill="#a9adb5" stroke="#747a84" stroke-width="1"/><path d="M-11.3 1.6 L0 -8 L11.3 1.6" fill="none" stroke="#cf0a0a" stroke-width="2.6" stroke-linejoin="miter"/><rect x="4.4" y="-10" width="2.8" height="6" fill="#cf0a0a"/><path d="M5.5 2.5 v9 M1 7 h9" stroke="#2f8f1f" stroke-width="4.2"/><path d="M5.5 3.3 v7.4 M1.8 7 h7.4" stroke="#6fd045" stroke-width="2.4"/></g></svg>
<svg style="position:absolute;left:893.0px;top:176.0px;" width="30" height="30" viewBox="0 0 30 30"><g transform="translate(15.0,15.0) scale(1.0)"><path d="M-8.7 2 L0 -5.4 L8.7 2 V9.6 H-8.7Z" fill="#a9adb5" stroke="#747a84" stroke-width="1"/><path d="M-11.3 1.6 L0 -8 L11.3 1.6" fill="none" stroke="#cf0a0a" stroke-width="2.6" stroke-linejoin="miter"/><rect x="4.4" y="-10" width="2.8" height="6" fill="#cf0a0a"/></g></svg>
<svg style="position:absolute;left:893.0px;top:217.0px;" width="30" height="30" viewBox="0 0 30 30"><g transform="translate(15.0,15.0) scale(1.0)"><path d="M-8.7 2 L0 -5.4 L8.7 2 V9.6 H-8.7Z" fill="#a9adb5" stroke="#747a84" stroke-width="1"/><path d="M-11.3 1.6 L0 -8 L11.3 1.6" fill="none" stroke="#cf0a0a" stroke-width="2.6" stroke-linejoin="miter"/><rect x="4.4" y="-10" width="2.8" height="6" fill="#cf0a0a"/><rect x="1" y="3" width="11.5" height="9.5" fill="#fff" stroke="#1c86e0" stroke-width="1"/><path d="M7.5 5.5h4M7.5 7.7h4M7.5 9.9h4" stroke="#1c86e0" stroke-width="0.9"/><circle cx="1.5" cy="7.8" r="4.6" fill="#1c86e0" stroke="#fff" stroke-width="0.8"/><rect x="0.8" y="6.8" width="1.5" height="3.6" fill="#fff"/><circle cx="1.5" cy="5.3" r="0.9" fill="#fff"/></g></svg>
<span class="t" style="left:923.60px;top:140.72px;font-size:21px;line-height:21px;color:#16213f;letter-spacing:-0.792px;">Saved Views</span>
<span class="t" style="left:923.60px;top:181.42px;font-size:21px;line-height:21px;color:#16213f;letter-spacing:-0.199px;">Home View</span>
<span class="t" style="left:923.60px;top:222.42px;font-size:21px;line-height:21px;color:#16213f;letter-spacing:-0.842px;">Set HV</span>
<svg style="position:absolute;left:1059.7px;top:135.8px;" width="30" height="30" viewBox="0 0 30 30"><g transform="translate(15.0,15.0) scale(1.0)"><rect x="-11" y="-11.5" width="22" height="23" rx="2" fill="#fff" stroke="#3b3f46" stroke-width="1.2"/><rect x="-9.2" y="-9.8" width="3.9" height="4.2" fill="#f4b6b6"/><rect x="-4.5" y="-9.8" width="3.9" height="4.2" fill="#f4d9a6"/><rect x="0.2" y="-9.8" width="3.9" height="4.2" fill="#a8e07a"/><rect x="4.9" y="-9.8" width="3.9" height="4.2" fill="#9fd4f7"/><rect x="-9.2" y="-4.8" width="3.9" height="4.2" fill="#ee6b6b"/><rect x="-4.5" y="-4.8" width="3.9" height="4.2" fill="#f0a65a"/><rect x="0.2" y="-4.8" width="3.9" height="4.2" fill="#62c23a"/><rect x="4.9" y="-4.8" width="3.9" height="4.2" fill="#4aa8ee"/><rect x="-9.2" y="0.2" width="3.9" height="4.2" fill="#e11f26"/><rect x="-4.5" y="0.2" width="3.9" height="4.2" fill="#ee7d12"/><rect x="0.2" y="0.2" width="3.9" height="4.2" fill="#2f9a1c"/><rect x="4.9" y="0.2" width="3.9" height="4.2" fill="#1b78d0"/><rect x="-9.2" y="5.2" width="3.9" height="4.2" fill="#c00f18"/><rect x="-4.5" y="5.2" width="3.9" height="4.2" fill="#d86a0a"/><rect x="0.2" y="5.2" width="3.9" height="4.2" fill="#1f7a12"/><rect x="4.9" y="5.2" width="3.9" height="4.2" fill="#0f5aa8"/></g></svg>
<span class="t" style="left:1063.50px;top:181.05px;font-size:20.5px;line-height:20.5px;color:#b40000;transform-origin:0 0;transform:scaleX(0.8815);font-weight:700;">Aa</span>
<svg style="position:absolute;left:1059.7px;top:217.0px;" width="30" height="30" viewBox="0 0 30 30"><g transform="translate(15.0,15.0) scale(1.0)"><defs><linearGradient id="gcam" x1="0" y1="0" x2="0" y2="1"><stop offset="0" stop-color="#a3aab3"/><stop offset="1" stop-color="#59606a"/></linearGradient></defs><rect x="-11.5" y="-8" width="23" height="15.5" rx="1.8" fill="url(#gcam)" stroke="#3b4048" stroke-width="1.1"/><rect x="-8.5" y="-10.3" width="5.5" height="2.6" fill="#4a5058"/><rect x="4.8" y="-6.3" width="4.6" height="2.4" rx="0.8" fill="#f2f2f2" stroke="#3b4048" stroke-width="0.7"/><circle cx="-1.5" cy="1" r="6" fill="#eef2f7" stroke="#4a5058" stroke-width="1.2"/><circle cx="-1.5" cy="1" r="3.9" fill="#a9d4f5"/><circle cx="-2.6" cy="-0.2" r="1.6" fill="#e6f3fd"/><g transform="translate(6,6.8)"><circle r="5.4" fill="#c3c8d0" stroke="#8d939d" stroke-width="1.6" stroke-dasharray="2.4 1.4"/><circle r="4" fill="#c9ced6"/><circle r="2.1" fill="#f4f4f4" stroke="#9aa0aa" stroke-width="0.7"/></g></g></svg>
<svg style="position:absolute;left:1138px;top:133px;" width="50" height="50" viewBox="0 0 50 50"><path d="M27.6 1.2 C37 9 46 20 48.6 34 V48.4 C38 48.5 27.5 47 16.5 41 C8 36.5 3 31 1.3 27 V18.3Z" fill="#fff" stroke="none"/>
<path d="M1.3 18.3 L27.6 1.2 C37 9 46 20 48.6 34 M1.3 18.3 C10 25 28 36 48.6 34 M1.3 18.3 V27 C6 36 24 48.5 48.6 48.4 V34" fill="none" stroke="#2a2e35" stroke-width="1.2"/>
<path d="M1.3 25.3 C10 33 26 42.5 48.6 41.3" fill="none" stroke="#1c7fd0" stroke-width="1.2"/>
<path d="M16 27 L36 10 M27 31.8 L42.7 18" stroke="#e82a2a" stroke-width="1.3"/><path d="M16.4 27.5 V43.7 M27.2 32 V46.8" stroke="#4aa81c" stroke-width="1.5"/></svg>
<span class="t" style="left:1121.60px;top:201.12px;font-size:21px;line-height:21px;color:#16213f;letter-spacing:-0.375px;">Contours</span>
<svg style="position:absolute;left:1212.5px;top:135.2px;" width="30" height="30" viewBox="0 0 30 30"><g transform="translate(15.0,15.0) scale(1.0)"><path d="M-10.5 -8.5 H10.5 V9 C0 8 -8 2 -10.5 -8.5Z" fill="#fff" stroke="#1b8be0" stroke-width="1.5"/><path d="M-4 -8.5 C-2 -2 3 2 10.5 3.5 M2 -8.5 C3.5 -5 6 -3.5 10.5 -2.5" fill="none" stroke="#0f3d68" stroke-width="1.4"/></g></svg>
<span class="t" style="left:1243.00px;top:140.72px;font-size:21px;line-height:21px;color:#16213f;letter-spacing:-0.673px;">Sections</span>
<svg style="position:absolute;left:1211.8px;top:176.0px;" width="30" height="30" viewBox="0 0 30 30"><g transform="translate(15.0,15.0) scale(1.0)"><path d="M-11.5 -6.5 H11.5 C9 3 4 6.5 -1 6.5 H-11.5Z" fill="#fff" stroke="#1b8be0" stroke-width="1.5"/><path d="M-11.5 -2.5 C-5 -2.5 -1 -3.5 0.5 -6.5 M-11.5 1.7 C-2 1.7 4.5 0 7 -6.5" fill="none" stroke="#0f3d68" stroke-width="1.4"/></g></svg>
<span class="t" style="left:1243.00px;top:181.42px;font-size:21px;line-height:21px;color:#16213f;letter-spacing:-0.471px;">Buttocks</span>
<svg style="position:absolute;left:1211.8px;top:217.7px;" width="30" height="30" viewBox="0 0 30 30"><g transform="translate(15.0,15.0) scale(1.0)"><path d="M-11.5 -8 C0 -8 9 -4 11.5 0 C9 4.5 0 8 -11.5 8Z" fill="#fff" stroke="#1b8be0" stroke-width="1.5"/><path d="M-11.5 -4 C-4 -4 1 -2 4 0.3 C1 3 -4 4.3 -11.5 4.3" fill="none" stroke="#0f3d68" stroke-width="1.4"/></g></svg>
<span class="t" style="left:1243.00px;top:222.42px;font-size:21px;line-height:21px;color:#16213f;letter-spacing:-0.328px;">Waterlines</span>
<svg style="position:absolute;left:1348.8px;top:135.0px;" width="30" height="30" viewBox="0 0 30 30"><g transform="translate(15.0,15.0) scale(1.0)"><path d="M-11.5 -6.5 H11.5 C10 3 5 6.5 0 6.5 H-11.5Z" fill="#fff" stroke="#1b8be0" stroke-width="1.5"/><path d="M-11.5 0 H12" fill="none" stroke="#0f3d68" stroke-width="1.4"/></g></svg>
<span class="t" style="left:1380.40px;top:140.72px;font-size:21px;line-height:21px;color:#16213f;transform-origin:0 0;transform:scaleX(0.9086);">DWL</span>
<svg style="position:absolute;left:1348.4px;top:175.0px;" width="30" height="30" viewBox="0 0 30 30"><g transform="translate(15.0,15.0) scale(1.0)"><path d="M-11 -10 H6.5 C6.5 -1 0 6 -11 6.5Z" fill="#fff" stroke="#1b8be0" stroke-width="1.5"/><path d="M-11 -10 L11.5 -1.7 M-11 -10 L6.7 6.6 M-11 -10 L-1.3 11.5" fill="none" stroke="#0f3d68" stroke-width="1.4"/></g></svg>
<span class="t" style="left:1380.40px;top:181.42px;font-size:21px;line-height:21px;color:#16213f;letter-spacing:-0.411px;">Diagonals</span>
<svg style="position:absolute;left:1349.0px;top:217.0px;" width="30" height="30" viewBox="0 0 30 30"><g transform="translate(15.0,15.0) scale(1.0)"><rect x="-12" y="-12" width="24" height="24" fill="#fff"/><path d="M-10.7 -9.7 H5 V-1.5 L-3.2 4 L-10.7 -1.5Z" fill="#1789f0"/><rect x="-8" y="-6.6" width="10.2" height="3.6" fill="#fff"/><ellipse cx="5.4" cy="6.3" rx="4.4" ry="3" fill="#fff" stroke="#111" stroke-width="1.3"/><circle cx="5.4" cy="6.3" r="1.6" fill="#111"/></g></svg>
<span class="t" style="left:1380.40px;top:222.42px;font-size:21px;line-height:21px;color:#16213f;letter-spacing:-1.359px;">Parts</span>
<div style="position:absolute;left:1489.3px;top:130.4px;width:93.4px;height:40.2px;background:linear-gradient(#fff7e6,#fdebc6);border:1.3px solid #f0c87c;box-sizing:border-box"></div>
<svg style="position:absolute;left:1491.0px;top:135.5px;" width="30" height="30" viewBox="0 0 30 30"><g transform="translate(15.0,15.0) scale(1.0)"><path d="M-11.5 -7.5 C0 -9.5 9 -5 11.5 0 C9 4.5 0 8 -11.5 8Z" fill="#fff" stroke="#0f3d68" stroke-width="1.7"/></g></svg>
<span class="t" style="left:1521.80px;top:140.72px;font-size:21px;line-height:21px;color:#0d1428;letter-spacing:-1.277px;">Edges</span>
<svg style="position:absolute;left:1491.0px;top:176.2px;" width="30" height="30" viewBox="0 0 30 30"><g transform="translate(15.0,15.0) scale(1.0)"><path d="M-9 -8.7 H9 C8 1 1 8 -9 8.3Z" fill="#fff" stroke="#1b8be0" stroke-width="1.5"/><path d="M-9 -4.8 L4 0.6" fill="none" stroke="#0f3d68" stroke-width="1.4"/></g></svg>
<span class="t" style="left:1521.80px;top:181.42px;font-size:21px;line-height:21px;color:#16213f;letter-spacing:-0.966px;">Bonds</span>
<svg style="position:absolute;left:1491.0px;top:217.0px;" width="30" height="30" viewBox="0 0 30 30"><g transform="translate(15.0,15.0) scale(1.0)"><path d="M-11.5 -6.5 H11.5 C10 3 5 6.5 0 6.5 H-11.5Z" fill="#fff" stroke="#1b8be0" stroke-width="1.5"/><path d="M2.2 -1 C5 -3.5 8 -4.5 11.2 -5.2" fill="none" stroke="#0f3d68" stroke-width="1.4"/></g></svg>
<span class="t" style="left:1521.80px;top:222.42px;font-size:21px;line-height:21px;color:#16213f;letter-spacing:-0.890px;">Features</span>
<svg style="position:absolute;left:1619.0px;top:135.0px;" width="30" height="30" viewBox="0 0 30 30"><g transform="translate(15.0,15.0) scale(1.0)"><path d="M1.5 -11.2 L11.6 3.8 L-6.8 11 L-11.4 1.6Z" fill="#fff" stroke="#1b8be0" stroke-width="1.5"/><path d="M-5.4 -4.6 L2.4 7.6 M-9 6.4 L6.6 -3.7" fill="none" stroke="#0f3d68" stroke-width="1.4"/></g></svg>
<span class="t" style="left:1650.00px;top:140.72px;font-size:21px;line-height:21px;color:#16213f;letter-spacing:-0.631px;">Parametrics</span>
<div style="position:absolute;left:1617.2px;top:171.3px;width:156.5px;height:40.2px;background:linear-gradient(#fff7e6,#fdebc6);border:1.3px solid #f0c87c;box-sizing:border-box"></div>
<svg style="position:absolute;left:1619.0px;top:175.0px;" width="30" height="30" viewBox="0 0 30 30"><g transform="translate(15.0,15.0) scale(1.0)"><path d="M-5.4 2.1 L4 -6.6 L11.4 0.9 L1.2 10.9Z" fill="#fff" stroke="#1b8be0" stroke-width="1.5"/><path d="M-10.8 7.5 L7.8 -10.5" fill="none" stroke="#1b8be0" stroke-width="1.5"/><path d="M-5.4 2.1 L4 -6.6" fill="none" stroke="#0f3d68" stroke-width="1.5"/></g></svg>
<span class="t" style="left:1650.00px;top:181.42px;font-size:21px;line-height:21px;color:#0d1428;letter-spacing:-0.221px;">Intersections</span>
<svg style="position:absolute;left:1619.0px;top:217.0px;" width="30" height="30" viewBox="0 0 30 30"><g transform="translate(15.0,15.0) scale(1.0)"><path d="M-11.5 -6.5 H11.5 C10 3 5 6.5 0 6.5 H-11.5Z" fill="#fff" stroke="#1b8be0" stroke-width="1.5"/><path d="M-5.4 6.3 C-5.4 1.5 -1 2 2 0 C4.5 -2 3.8 -4 4.8 -6.3" fill="none" stroke="#0f3d68" stroke-width="1.4"/></g></svg>
<span class="t" style="left:1650.00px;top:222.42px;font-size:21px;line-height:21px;color:#16213f;letter-spacing:-0.777px;">Trim Curves</span>
<span class="t" style="left:1791.80px;top:199.92px;font-size:21px;line-height:21px;color:#16213f;letter-spacing:0.056px;">Window</span>
<svg style="position:absolute;left:1821.0px;top:241.2px;" width="10" height="5" viewBox="0 0 10 5"><path d="M0 0 H10 L5.0 5Z" fill="#16213f"/></svg>
<span class="t" style="left:1910.00px;top:199.92px;font-size:21px;line-height:21px;color:#16213f;letter-spacing:-1.119px;">Part</span>
<span class="t" style="left:1881.00px;top:225.42px;font-size:21px;line-height:21px;color:#16213f;letter-spacing:0.020px;">Window</span>
<svg style="position:absolute;left:1959.0px;top:232.7px;" width="10" height="5" viewBox="0 0 10 5"><path d="M0 0 H10 L5.0 5Z" fill="#16213f"/></svg>
<span class="t" style="left:1988.00px;top:199.92px;font-size:21px;line-height:21px;color:#16213f;letter-spacing:-0.325px;">Arrange</span>
<svg style="position:absolute;left:2016.0px;top:241.2px;" width="10" height="5" viewBox="0 0 10 5"><path d="M0 0 H10 L5.0 5Z" fill="#16213f"/></svg>
<div style="position:absolute;left:0px;top:292px;width:2560px;height:4px;background:#c0c0c0"></div>
<div style="position:absolute;left:0px;top:296px;width:2560px;height:51px;background:#9daac4"></div>
<div style="position:absolute;left:0px;top:296px;width:2560px;height:2px;background:#a9b6cd"></div>
<div style="position:absolute;left:0px;top:343.2px;width:2560px;height:2px;background:linear-gradient(#b4c0d6,#c6d1e3)"></div>
<div style="position:absolute;left:4px;top:298px;width:2034.5px;height:46.4px;background:#bcc7da;border-radius:3px;box-shadow:inset 0 1px 0 #cbd4e3"></div>
<div style="position:absolute;left:2020.9px;top:298px;width:17.6px;height:46.4px;background:#d4dae8;border-radius:0 3px 3px 0"></div>
<div style="position:absolute;left:2043.5px;top:298px;width:304.3px;height:46.4px;background:#bcc7da;border-radius:3px;box-shadow:inset 0 1px 0 #cbd4e3"></div>
<div style="position:absolute;left:2328.7px;top:298px;width:19.1px;height:46.4px;background:#d4dae8;border-radius:0 3px 3px 0"></div>
<div style="position:absolute;left:12px;top:305px;width:4px;height:4px;background:#7080a0"></div>
<div style="position:absolute;left:12px;top:313px;width:4px;height:4px;background:#7080a0"></div>
<div style="position:absolute;left:12px;top:321px;width:4px;height:4px;background:#7080a0"></div>
<div style="position:absolute;left:12px;top:329px;width:4px;height:4px;background:#7080a0"></div>
<div style="position:absolute;left:2052.2px;top:305px;width:4px;height:4px;background:#7080a0"></div>
<div style="position:absolute;left:2052.2px;top:313px;width:4px;height:4px;background:#7080a0"></div>
<div style="position:absolute;left:2052.2px;top:321px;width:4px;height:4px;background:#7080a0"></div>
<div style="position:absolute;left:2052.2px;top:329px;width:4px;height:4px;background:#7080a0"></div>
<div style="position:absolute;left:99.80000000000001px;top:304.4px;width:1.3px;height:32.3px;background:#7f8ca6"></div>
<div style="position:absolute;left:188.9px;top:304.4px;width:1.3px;height:32.3px;background:#7f8ca6"></div>
<div style="position:absolute;left:394.79999999999995px;top:304.4px;width:1.3px;height:32.3px;background:#7f8ca6"></div>
<div style="position:absolute;left:600.9px;top:304.4px;width:1.3px;height:32.3px;background:#7f8ca6"></div>
<div style="position:absolute;left:1079.9px;top:304.4px;width:1.3px;height:32.3px;background:#7f8ca6"></div>
<div style="position:absolute;left:1324.8000000000002px;top:304.4px;width:1.3px;height:32.3px;background:#7f8ca6"></div>
<div style="position:absolute;left:1920.9px;top:304.4px;width:1.3px;height:32.3px;background:#7f8ca6"></div>
<div style="position:absolute;left:1970.9px;top:304.4px;width:1.3px;height:32.3px;background:#7f8ca6"></div>
<svg style="position:absolute;left:22px;top:304.9px;" width="30" height="30" viewBox="0 0 30 30"><g transform="translate(15,15) scale(1.0)"><defs><linearGradient id="tfl" x1="0" y1="0" x2="0" y2="1"><stop offset="0" stop-color="#3a3e48"/><stop offset="1" stop-color="#14161b"/></linearGradient></defs><path d="M-11 -10.5 H11 V11 H-9 L-11 9Z" fill="url(#tfl)"/><rect x="-6.3" y="-9.8" width="12.8" height="9.5" fill="#eef0f5"/><path d="M-6.3 -7h12.8M-6.3 -5h12.8M-6.3 -3h12.8" stroke="#cfd4df" stroke-width="0.8"/><rect x="-5.7" y="3.2" width="11" height="7" fill="#c9cbd0"/><rect x="-3.8" y="4.2" width="2.8" height="5" fill="#2b2e35"/></g></svg>
<svg style="position:absolute;left:61px;top:304.9px;" width="30" height="30" viewBox="0 0 30 30"><g transform="translate(15,15) scale(1.0)"><defs><linearGradient id="tfl" x1="0" y1="0" x2="0" y2="1"><stop offset="0" stop-color="#3a3e48"/><stop offset="1" stop-color="#14161b"/></linearGradient></defs><path d="M-11 -10.5 H11 V11 H-9 L-11 9Z" fill="url(#tfl)"/><rect x="-6.3" y="-9.8" width="12.8" height="9.5" fill="#eef0f5"/><path d="M-6.3 -7h12.8M-6.3 -5h12.8M-6.3 -3h12.8" stroke="#cfd4df" stroke-width="0.8"/><rect x="-5.7" y="3.2" width="11" height="7" fill="#c9cbd0"/><rect x="-3.8" y="4.2" width="2.8" height="5" fill="#2b2e35"/><g transform="translate(-3.5,11.5) rotate(-46)"><path d="M0 0 L4 -2.3 H19 V2.3 H4Z" fill="#f3a51a" stroke="#fff" stroke-width="0.7"/><path d="M0 0 L4 -2.3 V2.3Z" fill="#e8c9a0"/><path d="M0 0 L1.6 -0.9 V0.9Z" fill="#333"/><rect x="17" y="-2.3" width="1.5" height="4.6" fill="#9aa"/><rect x="18.5" y="-2.3" width="3" height="4.6" rx="1" fill="#e8643c"/><path d="M4 0 H17" stroke="#c97a08" stroke-width="0.7"/></g></g></svg>
<svg style="position:absolute;left:111px;top:305.7px;" width="30" height="30" viewBox="0 0 30 30"><g transform="translate(15,15) scale(1.06)"><g stroke="#fff" stroke-width="1.6" stroke-opacity="0.7"><defs><linearGradient id="gu2" x1="0" y1="0" x2="0" y2="1"><stop offset="0" stop-color="#0a63c0"/><stop offset="1" stop-color="#45b5f7"/></linearGradient></defs><path d="M-9.8 0 L-1.8 -8 L-1.8 -3.6 C4 -3.6 8.5 0.5 9.6 7.5 C6.5 3.5 3 2.6 -1.8 3 L-1.8 7.6Z" fill="url(#gu2)"/></g></g></svg>
<svg style="position:absolute;left:149.8px;top:305.7px;" width="30" height="30" viewBox="0 0 30 30"><g transform="translate(15,15) scale(1.04)"><g stroke="#fff" stroke-width="1" stroke-opacity="0.35"><g transform="scale(-1,1)"><defs><linearGradient id="gr2" x1="0" y1="0" x2="0" y2="1"><stop offset="0" stop-color="#8d919a"/><stop offset="1" stop-color="#b1b4bb"/></linearGradient></defs><path d="M-9.8 0 L-1.8 -8 L-1.8 -3.6 C4 -3.6 8.5 0.5 9.6 7.5 C6.5 3.5 3 2.6 -1.8 3 L-1.8 7.6Z" fill="url(#gr2)"/></g></g></g></svg>
<svg style="position:absolute;left:200.4px;top:305.8px;" width="30" height="30" viewBox="0 0 30 30"><g transform="translate(15,15) scale(0.96)"><path d="M1.6 1.4 L9.9 9.4" stroke="#f0921e" stroke-width="3.7"/><circle cx="-3.8" cy="-4.1" r="7.5" fill="#e6f4fd" stroke="#00284a" stroke-width="1.95"/><path d="M-7.8 -4.1 H0.2 M-3.8 -8.1 V-0.1" stroke="#00284a" stroke-width="1.95"/></g></svg>
<svg style="position:absolute;left:239.4px;top:305.8px;" width="30" height="30" viewBox="0 0 30 30"><g transform="translate(15,15) scale(0.96)"><path d="M1.6 1.4 L9.9 9.4" stroke="#f0921e" stroke-width="3.7"/><circle cx="-3.8" cy="-4.1" r="7.5" fill="#e6f4fd" stroke="#00284a" stroke-width="1.95"/><path d="M-7.8 -4.1 H0.2" stroke="#00284a" stroke-width="1.95"/></g></svg>
<svg style="position:absolute;left:278.6px;top:305.8px;" width="30" height="30" viewBox="0 0 30 30"><g transform="translate(15,15) scale(0.96)"><path d="M1.6 1.4 L9.9 9.4" stroke="#f0921e" stroke-width="3.7"/><circle cx="-3.8" cy="-4.1" r="7.5" fill="#e6f4fd" stroke="#00284a" stroke-width="1.95"/><path d="M-8 -4.1 H0.4 M-3.8 -8.3 V0.1" stroke="#00284a" stroke-width="1.2"/><path d="M-9 -4.1 l2 -1.7 v3.4z M1.4 -4.1 l-2 -1.7 v3.4z M-3.8 -9.3 l-1.7 2 h3.4z M-3.8 1.1 l-1.7 -2 h3.4z" fill="#00284a"/></g></svg>
<svg style="position:absolute;left:316px;top:304.7px;" width="30" height="30" viewBox="0 0 30 30"><g transform="translate(15,15) scale(1.02)"><path d="M-9.9 -6.4 C-10.6 -7.7 -9.3 -8.5 -8.3 -7.6 L-7.8 -8.4 C-8.3 -10.2 -6.9 -10.9 -6 -9.8 L-5 -10.4 C-4.8 -12 -3 -12.2 -2.4 -10.9 L-0.6 -8.8 C-0.3 -10.6 1.4 -10.6 2 -9.3 L4.2 -6.4 L7.4 -2.8 C8.5 -1 9.2 1.9 10.6 7.6 L3.8 11.9 L-0.9 9.8 L-6.6 6.5 L-9.4 5.2 C-10.6 4.4 -9.6 3 -8.4 3.5 L-4.5 5.2 C-3 5.4 -2 4.6 -2.3 3.7 L-4.1 0.4Z" fill="#fff" stroke="#2a2a2a" stroke-width="1.2" stroke-linejoin="round"/><path d="M-8 -7.2 L-3.6 -2.4 M-5.6 -9.3 L-1.4 -4.2 M-2 -10 L1.7 -4.4" fill="none" stroke="#2a2a2a" stroke-width="1"/></g></svg>
<svg style="position:absolute;left:355.8px;top:304.8px;" width="30" height="30" viewBox="0 0 30 30"><g transform="translate(15,15) scale(1.05)"><path d="M-11.9 -1.5 C-11 -7 -4 -9 3.9 -8.3 L3.9 -4.6 C-3 -5.2 -7.5 -3.8 -8.4 -1Z" fill="#82cfff"/><path d="M-5.4 -7.9 C-4.5 -10 -2.5 -11.4 0.2 -11.8 C-1.5 -10.5 -2.3 -9.5 -2.6 -8.2Z" fill="#82cfff"/><path d="M-3.8 5.2 C-2.5 9 0.5 11 3 11.6 L4 9.4 C1.5 9 -0.3 7.3 -1.5 4.6Z" fill="#82cfff"/><path d="M-11.9 -1.5 C-12 1 -10.5 3 -6.3 4.2 L-6.5 7.2 L2 2.8 L-5.8 -2.5 L-6.1 0.4 C-8.5 0 -9.5 -0.8 -8.4 -1Z" fill="#0a8de6"/><path d="M4.6 -9.7 L11.8 -3.3 L8.8 -2.9 C10.2 3.5 7.5 10 2.1 11.8 C5.5 8.5 6.8 3.5 6.4 -1.8 L3.7 -1.1Z" fill="#0a8de6"/></g></svg>
<svg style="position:absolute;left:406px;top:304.5px;" width="30" height="30" viewBox="0 0 30 30"><g transform="translate(15,15) scale(1.0)"><path d="M-11.5 1 L-2 -9.5 L6.5 -6.5 L11.5 1.5 L6 -3 L-4.5 9.5Z" fill="#fff"/><path d="M-11.5 1L-8 -3L-5 0L-8.5 4Z" fill="#1b87e6"/><path d="M-5 -6.5L-2 -9.5L1.5 -8L-2 -3.5Z" fill="#1b87e6"/><path d="M-5 0L-2 -3.5L1 -0.5L-2.5 3Z" fill="#1b87e6"/><path d="M-6.5 6.8L-2.5 3L0 6.5L-4.5 9.5Z" fill="#1b87e6"/><path d="M1 -0.5L4.5 -6L6.5 -4L3.5 2.5Z" fill="#1b87e6"/><path d="M-11.5 1 L-8 -3 L-5 -6.5 L-2 -9.5" fill="none" stroke="#1b87e6" stroke-width="0.9"/><path d="M-8.5 4 L-5 0 L-2 -3.5 L1.5 -8" fill="none" stroke="#1b87e6" stroke-width="0.9"/><path d="M-6.5 6.8 L-2.5 3 L1 -0.5 L4.5 -6" fill="none" stroke="#1b87e6" stroke-width="0.9"/><path d="M-4.5 9.5 L0 6.5 L3.5 2.5 L6.5 -4" fill="none" stroke="#1b87e6" stroke-width="0.9"/><path d="M-11.5 1 L-8.5 4 L-6.5 6.8 L-4.5 9.5" fill="none" stroke="#1b87e6" stroke-width="0.9"/><path d="M-8 -3 L-5 0 L-2.5 3 L0 6.5" fill="none" stroke="#1b87e6" stroke-width="0.9"/><path d="M-5 -6.5 L-2 -3.5 L1 -0.5 L3.5 2.5" fill="none" stroke="#1b87e6" stroke-width="0.9"/><path d="M-2 -9.5 L1.5 -8 L4.5 -6 L6.5 -4" fill="none" stroke="#1b87e6" stroke-width="0.9"/><path d="M-2 -9.5 L6 -7.5 L11.5 1.5 M1.5 -8 L9 -1.5 M4.5 -6 L6.5 -4" fill="none" stroke="#1b87e6" stroke-width="0.9"/><circle cx="-11.5" cy="1" r="1.2" fill="#0f3d68"/><circle cx="-8" cy="-3" r="1.2" fill="#0f3d68"/><circle cx="-5" cy="-6.5" r="1.2" fill="#0f3d68"/><circle cx="-2" cy="-9.5" r="1.2" fill="#0f3d68"/><circle cx="-8.5" cy="4" r="1.2" fill="#0f3d68"/><circle cx="-5" cy="0" r="1.2" fill="#0f3d68"/><circle cx="-2" cy="-3.5" r="1.2" fill="#0f3d68"/><circle cx="1.5" cy="-8" r="1.2" fill="#0f3d68"/><circle cx="-6.5" cy="6.8" r="1.2" fill="#0f3d68"/><circle cx="-2.5" cy="3" r="1.2" fill="#0f3d68"/><circle cx="1" cy="-0.5" r="1.2" fill="#0f3d68"/><circle cx="4.5" cy="-6" r="1.2" fill="#0f3d68"/><circle cx="-4.5" cy="9.5" r="1.2" fill="#0f3d68"/><circle cx="0" cy="6.5" r="1.2" fill="#0f3d68"/><circle cx="3.5" cy="2.5" r="1.2" fill="#0f3d68"/><circle cx="6.5" cy="-4" r="1.2" fill="#0f3d68"/><circle cx="6" cy="-7.5" r="1.2" fill="#0f3d68"/><circle cx="9" cy="-3.5" r="1.2" fill="#0f3d68"/><circle cx="11.5" cy="1.5" r="1.2" fill="#0f3d68"/></g></svg>
<svg style="position:absolute;left:445px;top:304.7px;" width="30" height="30" viewBox="0 0 30 30"><g transform="translate(15,15) scale(1.0)"><path d="M-8.2 8.5 C-3 6 -1.5 2 -0.5 -1 C0.5 -4 3 -7.5 8.2 -9" fill="none" stroke="#8a8d94" stroke-width="1.4"/><circle cx="-8.2" cy="8.5" r="2.1" fill="#8a8d94"/><circle cx="8.2" cy="-9" r="2.1" fill="#8a8d94"/><circle cx="-5" cy="-5.8" r="2" fill="#8a8d94"/><circle cx="2.2" cy="5.2" r="2" fill="#8a8d94"/></g></svg>
<svg style="position:absolute;left:484px;top:305px;" width="30" height="30" viewBox="0 0 30 30"><g transform="translate(15,15) scale(1.0)"><path d="M-10.5 -8 H0.3 V8.6 L-10.5 4Z" fill="#fff"/><path d="M0.3 -8 H10.8 V4 L0.3 8.6Z" fill="#07406e"/><path d="M-10.5 -8 H10.8 V4 L0.3 8.6 L-10.5 4Z" fill="none" stroke="#1b87e6" stroke-width="1.3"/></g></svg>
<div style="position:absolute;left:519.1px;top:301.2px;width:38.8px;height:38.8px;background:linear-gradient(#fff9ea,#fdeac4);border:1.5px solid #f0c675;box-sizing:border-box"></div>
<svg style="position:absolute;left:523.5px;top:305px;" width="30" height="30" viewBox="0 0 30 30"><g transform="translate(15,15) scale(1.0)"><rect x="-12" y="-11.5" width="23.6" height="17.8" fill="#fff" stroke="#1b87e6" stroke-width="1.3"/><rect x="-12" y="-11.5" width="23.6" height="4.6" fill="#1b87e6"/><path d="M-9.5 -1.5 H-6 V-4 H-5 V-6 H-4 V-4 H-2.5 V-1.5 H9.5 L7.5 2 H-8.5Z" fill="#1b87e6"/><path d="M-10 4.2 H2" stroke="#1b87e6" stroke-width="1.3"/><path d="M0.20000000000000018 8.2 Q6.2 0.27999999999999936 12.2 8.2 Q6.2 16.119999999999997 0.20000000000000018 8.2Z" fill="#111"/><circle cx="6.2" cy="8.2" r="2.40" fill="none" stroke="#fff" stroke-width="1.02"/><circle cx="6.92" cy="7.48" r="0.72" fill="#fff"/></g></svg>
<svg style="position:absolute;left:561.7px;top:304.7px;" width="30" height="30" viewBox="0 0 30 30"><g transform="translate(15,15) scale(1.0)"><path d="M-7 -11.5 V11.5 M9 -11.5 V11.5 M-11.5 -5.8 H11.5 M-11.5 10.2 H11.5" stroke="#9aa0aa" stroke-width="1.2" stroke-dasharray="3 1.2" fill="none"/><rect x="-8" y="-6.8" width="2" height="2" fill="#7d828c"/><rect x="8" y="-6.8" width="2" height="2" fill="#7d828c"/><rect x="-8" y="9.2" width="2" height="2" fill="#7d828c"/><rect x="8" y="9.2" width="2" height="2" fill="#7d828c"/></g></svg>
<svg style="position:absolute;left:612px;top:305px;" width="30" height="30" viewBox="0 0 30 30"><g transform="translate(15,15) scale(1.0)"><path d="M-10.5 -8.5 H10.5 V9 C0 8 -8 2 -10.5 -8.5Z" fill="#fff" stroke="#1b8be0" stroke-width="1.5"/><path d="M-4 -8.5 C-2 -2 3 2 10.5 3.5 M2 -8.5 C3.5 -5 6 -3.5 10.5 -2.5" fill="none" stroke="#0f3d68" stroke-width="1.4"/></g></svg>
<svg style="position:absolute;left:651px;top:305px;" width="30" height="30" viewBox="0 0 30 30"><g transform="translate(15,15) scale(1.0)"><path d="M-11.5 -6.5 H11.5 C9 3 4 6.5 -1 6.5 H-11.5Z" fill="#fff" stroke="#1b8be0" stroke-width="1.5"/><path d="M-11.5 -2.5 C-5 -2.5 -1 -3.5 0.5 -6.5 M-11.5 1.7 C-2 1.7 4.5 0 7 -6.5" fill="none" stroke="#0f3d68" stroke-width="1.4"/></g></svg>
<svg style="position:absolute;left:690px;top:305px;" width="30" height="30" viewBox="0 0 30 30"><g transform="translate(15,15) scale(1.0)"><path d="M-11.5 -6.5 H11.5 C10 3 5 6.5 0 6.5 H-11.5Z" fill="#fff" stroke="#1b8be0" stroke-width="1.5"/><path d="M-11.5 0 H12" fill="none" stroke="#0f3d68" stroke-width="1.4"/></g></svg>
<svg style="position:absolute;left:729px;top:305.5px;" width="30" height="30" viewBox="0 0 30 30"><g transform="translate(15,15) scale(1.0)"><path d="M-11.5 -8 C0 -8 9 -4 11.5 0 C9 4.5 0 8 -11.5 8Z" fill="#fff" stroke="#1b8be0" stroke-width="1.5"/><path d="M-11.5 -4 C-4 -4 1 -2 4 0.3 C1 3 -4 4.3 -11.5 4.3" fill="none" stroke="#0f3d68" stroke-width="1.4"/></g></svg>
<svg style="position:absolute;left:768px;top:305.5px;" width="30" height="30" viewBox="0 0 30 30"><g transform="translate(15,15) scale(1.0)"><path d="M-11 -10 H6.5 C6.5 -1 0 6 -11 6.5Z" fill="#fff" stroke="#1b8be0" stroke-width="1.5"/><path d="M-11 -10 L11.5 -1.7 M-11 -10 L6.7 6.6 M-11 -10 L-1.3 11.5" fill="none" stroke="#0f3d68" stroke-width="1.4"/></g></svg>
<div style="position:absolute;left:803.1px;top:301.2px;width:38.8px;height:38.8px;background:linear-gradient(#fff9ea,#fdeac4);border:1.5px solid #f0c675;box-sizing:border-box"></div>
<svg style="position:absolute;left:807.5px;top:305.3px;" width="30" height="30" viewBox="0 0 30 30"><g transform="translate(15,15) scale(1.0)"><path d="M-11.5 -7.5 C0 -9.5 9 -5 11.5 0 C9 4.5 0 8 -11.5 8Z" fill="#fff" stroke="#0f3d68" stroke-width="1.7"/></g></svg>
<svg style="position:absolute;left:846px;top:305px;" width="30" height="30" viewBox="0 0 30 30"><g transform="translate(15,15) scale(1.0)"><path d="M-9 -8.7 H9 C8 1 1 8 -9 8.3Z" fill="#fff" stroke="#1b8be0" stroke-width="1.5"/><path d="M-9 -4.8 L4 0.6" fill="none" stroke="#0f3d68" stroke-width="1.4"/></g></svg>
<svg style="position:absolute;left:885px;top:305px;" width="30" height="30" viewBox="0 0 30 30"><g transform="translate(15,15) scale(1.0)"><path d="M-11.5 -6.5 H11.5 C10 3 5 6.5 0 6.5 H-11.5Z" fill="#fff" stroke="#1b8be0" stroke-width="1.5"/><path d="M2.2 -1 C5 -3.5 8 -4.5 11.2 -5.2" fill="none" stroke="#0f3d68" stroke-width="1.4"/></g></svg>
<svg style="position:absolute;left:924px;top:305px;" width="30" height="30" viewBox="0 0 30 30"><g transform="translate(15,15) scale(1.0)"><path d="M1.5 -11.2 L11.6 3.8 L-6.8 11 L-11.4 1.6Z" fill="#fff" stroke="#1b8be0" stroke-width="1.5"/><path d="M-5.4 -4.6 L2.4 7.6 M-9 6.4 L6.6 -3.7" fill="none" stroke="#0f3d68" stroke-width="1.4"/></g></svg>
<div style="position:absolute;left:958.9px;top:301.2px;width:38.8px;height:38.8px;background:linear-gradient(#fff9ea,#fdeac4);border:1.5px solid #f0c675;box-sizing:border-box"></div>
<svg style="position:absolute;left:963.3px;top:305px;" width="30" height="30" viewBox="0 0 30 30"><g transform="translate(15,15) scale(1.0)"><path d="M-5.4 2.1 L4 -6.6 L11.4 0.9 L1.2 10.9Z" fill="#fff" stroke="#1b8be0" stroke-width="1.5"/><path d="M-10.8 7.5 L7.8 -10.5" fill="none" stroke="#1b8be0" stroke-width="1.5"/><path d="M-5.4 2.1 L4 -6.6" fill="none" stroke="#0f3d68" stroke-width="1.5"/></g></svg>
<svg style="position:absolute;left:1002px;top:305px;" width="30" height="30" viewBox="0 0 30 30"><g transform="translate(15,15) scale(1.0)"><path d="M-11.5 -6.5 H11.5 C10 3 5 6.5 0 6.5 H-11.5Z" fill="#fff" stroke="#1b8be0" stroke-width="1.5"/><path d="M-5.4 6.3 C-5.4 1.5 -1 2 2 0 C4.5 -2 3.8 -4 4.8 -6.3" fill="none" stroke="#0f3d68" stroke-width="1.4"/></g></svg>
<svg style="position:absolute;left:1041.5px;top:305px;" width="30" height="30" viewBox="0 0 30 30"><g transform="translate(15,15) scale(1.0)"><path d="M-5 -11 L-10.5 -3 L-9.5 7 L-5 11 L0 7 L0.5 -3Z M-5 -11 L-5 -4 L-10.5 -3 M-5 -4 L0.5 -3 M-5 -4 L-9.5 7 M-5 -4 L0 7 M-9.5 7 L0 7" fill="#e2e4e9" fill-opacity="0.6" stroke="#9a9da5" stroke-width="1"/><path d="M-4.5 6.5 Q3.5 -4.0600000000000005 11.5 6.5 Q3.5 17.060000000000002 -4.5 6.5Z" fill="#75787f"/><circle cx="3.5" cy="6.5" r="3.20" fill="none" stroke="#c9d0de" stroke-width="1.36"/><circle cx="4.46" cy="5.54" r="0.96" fill="#c9d0de"/></g></svg>
<svg style="position:absolute;left:1092px;top:305px;" width="30" height="30" viewBox="0 0 30 30"><g transform="translate(15,15) scale(1.0)"><path d="M-10.0 -9.2L-4.6 -3.8M-4.6 -9.2L-10.0 -3.8" stroke="#0d5288" stroke-width="1.25" fill="none"/><path d="M4.8999999999999995 -11.3L10.3 -5.8999999999999995M10.3 -11.3L4.8999999999999995 -5.8999999999999995" stroke="#0d5288" stroke-width="1.25" fill="none"/><path d="M-12.3 5.7L-6.8999999999999995 11.100000000000001M-6.8999999999999995 5.7L-12.3 11.100000000000001" stroke="#0d5288" stroke-width="1.25" fill="none"/><path d="M-5 6 Q3 -1.5 11 6 Q3 13.5 -5 6Z" fill="#111"/><path d="M-2.5 12 L9 0" stroke="#bcc7da" stroke-width="2"/><path d="M-3 13 L9.5 0.5" stroke="#111" stroke-width="1.2"/></g></svg>
<svg style="position:absolute;left:1131px;top:305px;" width="30" height="30" viewBox="0 0 30 30"><g transform="translate(15,15) scale(1.0)"><path d="M4.7 -11.3L10.100000000000001 -5.8999999999999995M10.100000000000001 -11.3L4.7 -5.8999999999999995" stroke="#0d5288" stroke-width="1.25" fill="none"/><path d="M2.6 -2.4L9.4 4.4M9.4 -2.4L2.6 4.4" stroke="#0d5288" stroke-width="1.7" fill="none"/><path d="M-3.4 3.1999999999999997L2.8000000000000003 9.4M2.8000000000000003 3.1999999999999997L-3.4 9.4" stroke="#0d5288" stroke-width="1.6" fill="none"/><path d="M-12.3 5.7L-6.8999999999999995 11.100000000000001M-6.8999999999999995 5.7L-12.3 11.100000000000001" stroke="#0d5288" stroke-width="1.25" fill="none"/></g></svg>
<div style="position:absolute;left:1165.6px;top:301.2px;width:38.8px;height:38.8px;background:linear-gradient(#fff9ea,#fdeac4);border:1.5px solid #f0c675;box-sizing:border-box"></div>
<svg style="position:absolute;left:1170px;top:305px;" width="30" height="30" viewBox="0 0 30 30"><g transform="translate(15,15) scale(1.0)"><path d="M-10.3 -9.2L-4.8999999999999995 -3.8M-4.8999999999999995 -9.2L-10.3 -3.8" stroke="#0d5288" stroke-width="1.25" fill="none"/><path d="M4.8999999999999995 -11.3L10.3 -5.8999999999999995M10.3 -11.3L4.8999999999999995 -5.8999999999999995" stroke="#0d5288" stroke-width="1.25" fill="none"/><path d="M-12.3 6.1000000000000005L-6.8999999999999995 11.5M-6.8999999999999995 6.1000000000000005L-12.3 11.5" stroke="#0d5288" stroke-width="1.25" fill="none"/><path d="M-5.1 6.3 Q2.9 -4.260000000000001 10.9 6.3 Q2.9 16.86 -5.1 6.3Z" fill="#111"/><circle cx="2.9" cy="6.3" r="3.20" fill="none" stroke="#fff" stroke-width="1.36"/><circle cx="3.86" cy="5.34" r="0.96" fill="#fff"/></g></svg>
<svg style="position:absolute;left:1209px;top:305px;" width="30" height="30" viewBox="0 0 30 30"><g transform="translate(15,15) scale(1.0)"><path d="M-5 -11 L-10.5 -3 L-9.5 7 L-5 11 L0 7 L0.5 -3Z M-5 -11 L-5 -4 L-10.5 -3 M-5 -4 L0.5 -3 M-5 -4 L-9.5 7 M-5 -4 L0 7 M-9.5 7 L0 7" fill="#e2e4e9" fill-opacity="0.6" stroke="#9a9da5" stroke-width="1"/><path d="M-1.2000000000000002 7.5 Q4.8 -0.41999999999999993 10.8 7.5 Q4.8 15.42 -1.2000000000000002 7.5Z" fill="#75787f"/><circle cx="4.8" cy="7.5" r="2.40" fill="none" stroke="#c9d0de" stroke-width="1.02"/><circle cx="5.52" cy="6.78" r="0.72" fill="#c9d0de"/></g></svg>
<svg style="position:absolute;left:1248px;top:305px;" width="30" height="30" viewBox="0 0 30 30"><g transform="translate(15,15) scale(1.0)"><path d="M-6.5 -9 C-5 -2 -11 1 -9 8.5 M6 -9 C7 -4 4 -2 2 1" fill="none" stroke="#9a9da4" stroke-width="1.3"/><circle cx="-6.5" cy="-9" r="2.2" fill="#8a8d94"/><circle cx="6" cy="-9" r="2.2" fill="#8a8d94"/><rect x="-11" y="7" width="3.6" height="3.6" rx="1" fill="#8a8d94"/><path d="M-5.1 6.3 Q2.9 -4.260000000000001 10.9 6.3 Q2.9 16.86 -5.1 6.3Z" fill="#75787f"/><circle cx="2.9" cy="6.3" r="3.20" fill="none" stroke="#c9d0de" stroke-width="1.36"/><circle cx="3.86" cy="5.34" r="0.96" fill="#c9d0de"/></g></svg>
<div style="position:absolute;left:1282.1px;top:301.2px;width:38.8px;height:38.8px;background:linear-gradient(#fff9ea,#fdeac4);border:1.5px solid #f0c675;box-sizing:border-box"></div>
<svg style="position:absolute;left:1286.5px;top:305px;" width="30" height="30" viewBox="0 0 30 30"><g transform="translate(15,15) scale(1.0)"><path d="M-12 -4.5 C-8 -6 -3 -8.5 -1 -11 C2 -8 6 -5.5 9 -5 C5 -3 -1 -1 -5.5 2.5 C-7.5 0 -10 -3 -12 -4.5Z" fill="#fff" stroke="#1b87e6" stroke-width="1.4"/><path d="M-7 -7.5 C-4.5 -4.5 -2 -2 0 -0.8 M-4 -1.5 C-1 -5 2 -6.5 4 -7.5" fill="none" stroke="#1b87e6" stroke-width="1.2"/><path d="M-1.0 8 Q5 0.08000000000000007 11.0 8 Q5 15.92 -1.0 8Z" fill="#111"/><circle cx="5" cy="8" r="2.40" fill="none" stroke="#fff" stroke-width="1.02"/><circle cx="5.72" cy="7.28" r="0.72" fill="#fff"/></g></svg>
<div style="position:absolute;left:1332.1px;top:301.2px;width:38.8px;height:38.8px;background:linear-gradient(#fff9ea,#fdeac4);border:1.5px solid #f0c675;box-sizing:border-box"></div>
<svg style="position:absolute;left:1336.5px;top:305px;" width="30" height="30" viewBox="0 0 30 30"><g transform="translate(15,15) scale(1.0)"><path d="M-12 -1.5 L-7.5 -6 H12 C11.5 0 8 5 1 6.5 H-12Z" fill="#fff" stroke="#1b87e6" stroke-width="1.8" stroke-linejoin="round"/><path d="M-12 -1.5 H8.5 M-7.5 -6 V-1.5 M-12 2.5 H6 M-7.5 -3.8 H11.5" fill="none" stroke="#1b87e6" stroke-width="1.2"/></g></svg>
<svg style="position:absolute;left:1375px;top:305.2px;" width="30" height="30" viewBox="0 0 30 30"><g transform="translate(15,15) scale(1.0)"><path d="M-12 -8 C0 -8 9 -4 12 0.3 C9 4.5 0 8.5 -12 8.5Z" fill="#fff" stroke="#1b87e6" stroke-width="1.5"/><path d="M-12 0.3 H12" stroke="#0f3d68" stroke-width="1.4"/></g></svg>
<svg style="position:absolute;left:1414px;top:304.8px;" width="30" height="30" viewBox="0 0 30 30"><g transform="translate(15,15) scale(1.0)"><path d="M-12 -6.5 H11.7 C11 2 5 6.7 -1 6.7 H-12Z" fill="#fff" stroke="#1b87e6" stroke-width="1.5"/></g></svg>
<svg style="position:absolute;left:1453px;top:304.4px;" width="30" height="30" viewBox="0 0 30 30"><g transform="translate(15,15) scale(1.0)"><path d="M-8.3 -7.6 H8.3 V5 C5.5 7 3 7.8 0 8.1 C-3 7.8 -5.5 7 -8.3 5Z" fill="#fff" stroke="#1b87e6" stroke-width="1.9"/><path d="M0 -7.6 V8" stroke="#0f3d68" stroke-width="1.5"/></g></svg>
<svg style="position:absolute;left:1492px;top:305px;" width="30" height="30" viewBox="0 0 30 30"><g transform="translate(15,15) scale(1.0)"><rect x="-12" y="-11.7" width="24" height="23.6" fill="#fff" stroke="#1b87e6" stroke-width="1.2"/><rect x="-12" y="-11.7" width="24" height="3.6" fill="#1b87e6"/><path d="M-8 -4.5 H8 V2 L0 9 L-8 2Z" fill="#1b87e6"/><rect x="-4.5" y="-2" width="9" height="3.4" fill="#fff"/></g></svg>
<svg style="position:absolute;left:1531px;top:305px;" width="30" height="30" viewBox="0 0 30 30"><g transform="translate(15,15) scale(1.0)"><rect x="-12" y="-11" width="16" height="11" fill="#1b87e6"/><rect x="-11.00" y="-7.40" width="4.00" height="2.40" fill="#fff"/><rect x="-6.00" y="-7.40" width="4.00" height="2.40" fill="#fff"/><rect x="-1.00" y="-7.40" width="4.00" height="2.40" fill="#fff"/><rect x="-11.00" y="-4.00" width="4.00" height="2.40" fill="#fff"/><rect x="-6.00" y="-4.00" width="4.00" height="2.40" fill="#fff"/><rect x="-1.00" y="-4.00" width="4.00" height="2.40" fill="#fff"/><path d="M6.6 -6.6L11.6 -1.5999999999999996M11.6 -6.6L6.6 -1.5999999999999996" stroke="#0f3d68" stroke-width="1.3" fill="none"/><path d="M-4.6 4.4L0.3999999999999999 9.4M0.3999999999999999 4.4L-4.6 9.4" stroke="#0f3d68" stroke-width="1.3" fill="none"/><path d="M6.6 4.4L11.6 9.4M11.6 4.4L6.6 9.4" stroke="#0f3d68" stroke-width="1.3" fill="none"/></g></svg>
<svg style="position:absolute;left:1570px;top:305px;" width="30" height="30" viewBox="0 0 30 30"><g transform="translate(15,15) scale(1.0)"><rect x="-12" y="-11" width="16" height="11" fill="#1b87e6"/><rect x="-11.00" y="-7.40" width="4.00" height="2.40" fill="#fff"/><rect x="-6.00" y="-7.40" width="4.00" height="2.40" fill="#fff"/><rect x="-1.00" y="-7.40" width="4.00" height="2.40" fill="#fff"/><rect x="-11.00" y="-4.00" width="4.00" height="2.40" fill="#fff"/><rect x="-6.00" y="-4.00" width="4.00" height="2.40" fill="#fff"/><rect x="-1.00" y="-4.00" width="4.00" height="2.40" fill="#fff"/><path d="M-7.5 9.5 L-1.1 3.3 L5.3 8.4 L9.5 0.1" fill="none" stroke="#0f3d68" stroke-width="1.5"/><circle cx="-7.5" cy="9.5" r="1.7" fill="#0f3d68"/><circle cx="-1.1" cy="3.3" r="1.7" fill="#0f3d68"/><circle cx="5.3" cy="8.4" r="1.7" fill="#0f3d68"/><circle cx="9.5" cy="0.1" r="1.7" fill="#0f3d68"/></g></svg>
<svg style="position:absolute;left:1609px;top:305px;" width="30" height="30" viewBox="0 0 30 30"><g transform="translate(15,15) scale(1.0)"><rect x="-12" y="-11" width="16" height="11" fill="#1b87e6"/><rect x="-11.00" y="-7.40" width="4.00" height="2.40" fill="#fff"/><rect x="-6.00" y="-7.40" width="4.00" height="2.40" fill="#fff"/><rect x="-1.00" y="-7.40" width="4.00" height="2.40" fill="#fff"/><rect x="-11.00" y="-4.00" width="4.00" height="2.40" fill="#fff"/><rect x="-6.00" y="-4.00" width="4.00" height="2.40" fill="#fff"/><rect x="-1.00" y="-4.00" width="4.00" height="2.40" fill="#fff"/><path d="M-10.1 6.1 H9.1 V-7.3" fill="none" stroke="#1b87e6" stroke-width="1.4"/><circle cx="-10.1" cy="6.1" r="1.9" fill="#0f3d68"/><circle cx="9.1" cy="6.1" r="1.9" fill="#0f3d68"/><circle cx="9.1" cy="-7.3" r="1.9" fill="#0f3d68"/></g></svg>
<svg style="position:absolute;left:1648px;top:305px;" width="30" height="30" viewBox="0 0 30 30"><g transform="translate(15,15) scale(1.0)"><rect x="-12" y="-11" width="16" height="11" fill="#1b87e6"/><rect x="-11.00" y="-7.40" width="4.00" height="2.40" fill="#fff"/><rect x="-6.00" y="-7.40" width="4.00" height="2.40" fill="#fff"/><rect x="-1.00" y="-7.40" width="4.00" height="2.40" fill="#fff"/><rect x="-11.00" y="-4.00" width="4.00" height="2.40" fill="#fff"/><rect x="-6.00" y="-4.00" width="4.00" height="2.40" fill="#fff"/><rect x="-1.00" y="-4.00" width="4.00" height="2.40" fill="#fff"/><path d="M-7.7 9.7 C-5 5 -2.5 3 0 6 C2.5 9 6 8 9.6 0.8" fill="none" stroke="#0f3d68" stroke-width="1.4"/></g></svg>
<svg style="position:absolute;left:1687px;top:305px;" width="30" height="30" viewBox="0 0 30 30"><g transform="translate(15,15) scale(1.0)"><rect x="-12" y="-11" width="16" height="11" fill="#1b87e6"/><rect x="-11.00" y="-7.40" width="4.00" height="2.40" fill="#fff"/><rect x="-6.00" y="-7.40" width="4.00" height="2.40" fill="#fff"/><rect x="-1.00" y="-7.40" width="4.00" height="2.40" fill="#fff"/><rect x="-11.00" y="-4.00" width="4.00" height="2.40" fill="#fff"/><rect x="-6.00" y="-4.00" width="4.00" height="2.40" fill="#fff"/><rect x="-1.00" y="-4.00" width="4.00" height="2.40" fill="#fff"/><path d="M5 -0.5 V-6 a3 3 0 0 1 6 0 V-0.5Z" fill="#d5d8de" stroke="#0f3d68" stroke-width="1.1"/><path d="M-11 2.7 H0 V6 L-5.5 10 L-11 6Z" fill="#d5d8de" stroke="#0f3d68" stroke-width="1.1"/><circle cx="6.7" cy="6.5" r="4" fill="#d5d8de" stroke="#0f3d68" stroke-width="1.1"/></g></svg>
<svg style="position:absolute;left:1726px;top:305px;" width="30" height="30" viewBox="0 0 30 30"><g transform="translate(15,15) scale(1.0)"><path d="M-9.6 -9 V8.8 H9" fill="none" stroke="#111" stroke-width="1.5"/><path d="M-9.6 -11.5 l-2.6 3.8 h5.2z M11.2 8.8 l-3.8 -2.6 v5.2z" fill="#111"/><path d="M-8.3 7.8 C-7 -5 6 -5 7.7 7.8Z" fill="#9fd2fa" stroke="#1b87e6" stroke-width="1.1"/></g></svg>
<svg style="position:absolute;left:1765px;top:305px;" width="30" height="30" viewBox="0 0 30 30"><g transform="translate(15,15) scale(1.0)"><rect x="-10" y="-11" width="19" height="21.7" fill="#1b87e6"/><rect x="-9.00" y="-7.00" width="5" height="2" fill="#fff"/><rect x="-3.00" y="-7.00" width="5" height="2" fill="#fff"/><rect x="3.00" y="-7.00" width="5" height="2" fill="#fff"/><rect x="-9.00" y="-4.00" width="5" height="2" fill="#fff"/><rect x="-3.00" y="-4.00" width="5" height="2" fill="#fff"/><rect x="3.00" y="-4.00" width="5" height="2" fill="#fff"/><rect x="-9.00" y="-1.00" width="5" height="2" fill="#fff"/><rect x="-3.00" y="-1.00" width="5" height="2" fill="#fff"/><rect x="3.00" y="-1.00" width="5" height="2" fill="#fff"/><rect x="-9.00" y="2.00" width="5" height="2" fill="#fff"/><rect x="-3.00" y="2.00" width="5" height="2" fill="#fff"/><rect x="3.00" y="2.00" width="5" height="2" fill="#fff"/><rect x="-9.00" y="5.00" width="5" height="2" fill="#fff"/><rect x="-3.00" y="5.00" width="5" height="2" fill="#fff"/><rect x="3.00" y="5.00" width="5" height="2" fill="#fff"/><rect x="-9.00" y="8.00" width="5" height="2" fill="#fff"/><rect x="-3.00" y="8.00" width="5" height="2" fill="#fff"/><rect x="3.00" y="8.00" width="5" height="2" fill="#fff"/></g></svg>
<svg style="position:absolute;left:1804.2px;top:305px;" width="30" height="30" viewBox="0 0 30 30"><g transform="translate(15,15) scale(1.0)"><rect x="-12" y="-11.7" width="24" height="23.6" fill="#fff" stroke="#1b87e6" stroke-width="1.2"/><rect x="-12" y="-11.7" width="24" height="3.6" fill="#1b87e6"/><path d="M-7 2.5 H3.5 V-3.5 H8.5 V2 L0.5 10 L-7 2.5Z" fill="#1b87e6"/><rect x="-10" y="-6" width="13.5" height="7" fill="#d9dce2" stroke="#a6a9b0" stroke-width="0.8"/><path d="M-10 -3.6 H3.5 M-10 -1.2 H3.5 M-3 -3.6 V1" stroke="#a6a9b0" stroke-width="0.7"/></g></svg>
<svg style="position:absolute;left:1841.6px;top:305px;" width="30" height="30" viewBox="0 0 30 30"><g transform="translate(15,15) scale(1.0)"><rect x="-9" y="-11" width="19" height="21.7" fill="#1b87e6"/><rect x="-8.00" y="-7.00" width="5" height="2" fill="#fff"/><rect x="-2.00" y="-7.00" width="5" height="2" fill="#fff"/><rect x="4.00" y="-7.00" width="5" height="2" fill="#fff"/><rect x="-8.00" y="-4.00" width="5" height="2" fill="#fff"/><rect x="-2.00" y="-4.00" width="5" height="2" fill="#fff"/><rect x="4.00" y="-4.00" width="5" height="2" fill="#fff"/><rect x="-8.00" y="-1.00" width="5" height="2" fill="#fff"/><rect x="-2.00" y="-1.00" width="5" height="2" fill="#fff"/><rect x="4.00" y="-1.00" width="5" height="2" fill="#fff"/><rect x="-8.00" y="2.00" width="5" height="2" fill="#fff"/><rect x="-2.00" y="2.00" width="5" height="2" fill="#fff"/><rect x="4.00" y="2.00" width="5" height="2" fill="#fff"/><rect x="-8.00" y="5.00" width="5" height="2" fill="#fff"/><rect x="-2.00" y="5.00" width="5" height="2" fill="#fff"/><rect x="4.00" y="5.00" width="5" height="2" fill="#fff"/><rect x="-8.00" y="8.00" width="5" height="2" fill="#fff"/><rect x="-2.00" y="8.00" width="5" height="2" fill="#fff"/><rect x="4.00" y="8.00" width="5" height="2" fill="#fff"/><path d="M-10 7 C-5 5 -3 -4 0 -7.5 C1 -8 1 -6.5 0.5 -4 C0 -1 -1 3 0 3.5 C2 2 5 -7 8 -9.5 C9 -9.5 8.5 -7 8 -5 C7 -1 7 5 12 2.5" fill="none" stroke="#111" stroke-width="1.5" stroke-linecap="round"/></g></svg>
<svg style="position:absolute;left:1881.5px;top:305px;" width="30" height="30" viewBox="0 0 30 30"><g transform="translate(15,15) scale(1.0)"><rect x="-9.2" y="-11.7" width="18.4" height="23.4" rx="1" fill="#e4e6ea" stroke="#9a9ea6" stroke-width="1"/><rect x="-8" y="-10.5" width="16" height="5.6" fill="#86cbf8"/><rect x="-6.8" y="-2.6" width="3.4" height="2" fill="#e0222a"/><rect x="-1.8" y="-2.6" width="3.4" height="2" fill="#555a62"/><rect x="3.2" y="-2.6" width="3.4" height="2" fill="#e0222a"/><rect x="-6.8" y="0.8" width="3.4" height="2" fill="#555a62"/><rect x="-1.8" y="0.8" width="3.4" height="2" fill="#555a62"/><rect x="3.2" y="0.8" width="3.4" height="2" fill="#555a62"/><rect x="-6.8" y="4.2" width="3.4" height="2" fill="#555a62"/><rect x="-1.8" y="4.2" width="3.4" height="2" fill="#555a62"/><rect x="3.2" y="4.2" width="3.4" height="2" fill="#555a62"/><rect x="-6.8" y="7.6" width="3.4" height="2" fill="#555a62"/><rect x="-1.8" y="7.6" width="3.4" height="2" fill="#555a62"/><rect x="3.2" y="7.6" width="3.4" height="2" fill="#555a62"/><rect x="3.4" y="4.4" width="3" height="5.2" fill="#1b87e6"/></g></svg>
<div style="position:absolute;left:1928.1px;top:301.2px;width:38.8px;height:38.8px;background:linear-gradient(#fff9ea,#fdeac4);border:1.5px solid #f0c675;box-sizing:border-box"></div>
<svg style="position:absolute;left:1932.5px;top:305px;" width="30" height="30" viewBox="0 0 30 30"><g transform="translate(15,15) scale(1.0)"><path d="M-9.5 -7.5 L-3.5 -11.5 L2 -8.5 V-1.5 L-4 1 L-9.5 -1.5Z M-9.5 -7.5 L-4 -5.5 L2 -8.5 M-4 -5.5 V1 M-3.5 -11.5 V-5 L-9.5 -1.5 M-3.5 -5 L2 -1.5" fill="#eef7fe" stroke="#3aa0f0" stroke-width="1"/><path d="M-0.5 4 L5 0.3 L10.5 3 V9.5 L4.5 12 L-0.5 9.5Z" fill="#2b9af3"/><path d="M-0.5 4 L4.5 6 L10.5 3 L5 0.3Z" fill="#7cc6fb"/><path d="M4.5 6 V12 L10.5 9.5 V3Z" fill="#1b87e6"/><path d="M-10.2 1.5 V4.5 Q-10.2 6.5 -8 6.5 H-5.5" fill="none" stroke="#111" stroke-width="1.5"/><path d="M-3.2 6.5 l-3 -2.4 v4.8z" fill="#111"/></g></svg>
<svg style="position:absolute;left:1981.8px;top:304.7px;" width="30" height="30" viewBox="0 0 30 30"><g transform="translate(15,15) scale(1.0)"><defs><radialGradient id="ghp" cx="0.4" cy="0.3" r="0.8"><stop offset="0" stop-color="#3a6ad0"/><stop offset="1" stop-color="#0f2f86"/></radialGradient></defs><circle r="11" fill="#fff" stroke="#1a2f5e" stroke-width="1.2"/><circle r="9" fill="url(#ghp)"/><text x="0" y="5.6" text-anchor="middle" font-family="Liberation Sans,sans-serif" font-weight="700" font-size="15.5" fill="#fff">?</text></g></svg>
<svg style="position:absolute;left:2021.1px;top:327.5px;" width="16" height="14" viewBox="0 0 16 14"><g transform="translate(8,6)"><path d="M-4 1 H6 L1 6Z" fill="#fff"/><path d="M-5 -3 H5" stroke="#fff" stroke-width="1.6" transform="translate(1,1)"/><path d="M-5 0 H5 L0 5Z" fill="#111a2e"/><path d="M-5 -3.2 H5" stroke="#111a2e" stroke-width="1.6"/></g></svg>
<svg style="position:absolute;left:2330px;top:327.5px;" width="16" height="14" viewBox="0 0 16 14"><g transform="translate(8,6)"><path d="M-4 1 H6 L1 6Z" fill="#fff"/><path d="M-5 -3 H5" stroke="#fff" stroke-width="1.6" transform="translate(1,1)"/><path d="M-5 0 H5 L0 5Z" fill="#111a2e"/><path d="M-5 -3.2 H5" stroke="#111a2e" stroke-width="1.6"/></g></svg>
<div style="position:absolute;left:2058.2px;top:300.3px;width:149.3px;height:40.3px;background:#fff;border:1.3px solid #8a96ad;box-sizing:border-box;overflow:hidden"></div>
<div style="position:absolute;left:2181.5px;top:301.5px;width:25px;height:38px;background:#bcc7da;border:1px solid #e6ebf3;box-sizing:border-box"></div>
<div style="position:absolute;left:2060px;top:302px;width:121.3px;height:37px;overflow:hidden">
<span class="t" style="left:3.90px;top:8.14px;font-size:22.4px;line-height:22.4px;color:#000;">Home Perspective</span>
</div>
<svg style="position:absolute;left:2186.7px;top:316.9px;" width="13.4" height="6.6" viewBox="0 0 13.4 6.6"><path d="M0 0 H13.4 L6.7 6.6Z" fill="#16213f"/></svg>
<svg style="position:absolute;left:2212px;top:305px;" width="30" height="30" viewBox="0 0 30 30"><g transform="translate(15,15) scale(1.0)"><path d="M-8.7 2 L0 -5.4 L8.7 2 V9.6 H-8.7Z" fill="#a9adb5" stroke="#747a84" stroke-width="1"/><path d="M-11.3 1.6 L0 -8 L11.3 1.6" fill="none" stroke="#cf0a0a" stroke-width="2.6" stroke-linejoin="miter"/><rect x="4.4" y="-10" width="2.8" height="6" fill="#cf0a0a"/><path d="M5.5 2.5 v9 M1 7 h9" stroke="#2f8f1f" stroke-width="4.2"/><path d="M5.5 3.3 v7.4 M1.8 7 h7.4" stroke="#6fd045" stroke-width="2.4"/></g></svg>
<svg style="position:absolute;left:2251px;top:305px;" width="30" height="30" viewBox="0 0 30 30"><g transform="translate(15,15) scale(1.0)"><path d="M-8.7 2 L0 -5.4 L8.7 2 V9.6 H-8.7Z" fill="#a9adb5" stroke="#747a84" stroke-width="1"/><path d="M-11.3 1.6 L0 -8 L11.3 1.6" fill="none" stroke="#cf0a0a" stroke-width="2.6" stroke-linejoin="miter"/><rect x="4.4" y="-10" width="2.8" height="6" fill="#cf0a0a"/></g></svg>
<svg style="position:absolute;left:2290px;top:304.5px;" width="30" height="30" viewBox="0 0 30 30"><g transform="translate(15,15) scale(1.0)"><path d="M-8.7 2 L0 -5.4 L8.7 2 V9.6 H-8.7Z" fill="#a9adb5" stroke="#747a84" stroke-width="1"/><path d="M-11.3 1.6 L0 -8 L11.3 1.6" fill="none" stroke="#cf0a0a" stroke-width="2.6" stroke-linejoin="miter"/><rect x="4.4" y="-10" width="2.8" height="6" fill="#cf0a0a"/><rect x="1" y="3" width="11.5" height="9.5" fill="#fff" stroke="#1c86e0" stroke-width="1"/><path d="M7.5 5.5h4M7.5 7.7h4M7.5 9.9h4" stroke="#1c86e0" stroke-width="0.9"/><circle cx="1.5" cy="7.8" r="4.6" fill="#1c86e0" stroke="#fff" stroke-width="0.8"/><rect x="0.8" y="6.8" width="1.5" height="3.6" fill="#fff"/><circle cx="1.5" cy="5.3" r="0.9" fill="#fff"/></g></svg>
<div style="position:absolute;left:0px;top:345px;width:276px;height:36.5px;background:linear-gradient(90deg,#bccadc,#c9d6e4 60%,#d9e5f1)"></div>
<span class="t" style="left:7.70px;top:354.82px;font-size:21px;line-height:21px;color:#000;letter-spacing:0.650px;">Assembly</span>
<svg style="position:absolute;left:223px;top:356.3px;" width="13" height="18" viewBox="0 0 13 18"><path d="M3.2 0.8 H9.8 V9.2 H3.2Z" fill="none" stroke="#111" stroke-width="1.7"/><path d="M7.9 1 V9" stroke="#111" stroke-width="2.2"/><path d="M0.3 9.8 H12.7" stroke="#111" stroke-width="2"/><path d="M6.5 10 V17.5" stroke="#111" stroke-width="1.8"/></svg>
<svg style="position:absolute;left:253.6px;top:358px;" width="13" height="13" viewBox="0 0 13 13"><path d="M0.8 0.8 L12 12 M12 0.8 L0.8 12" stroke="#111" stroke-width="2.2"/></svg>
<div style="position:absolute;left:0px;top:381.5px;width:276px;height:506.5px;background:#fff"></div>
<svg style="position:absolute;left:5px;top:388.0px;" width="13" height="13" viewBox="0 0 13 13"><defs><linearGradient id="gex" x1="0" y1="0" x2="1" y2="1"><stop offset="0" stop-color="#fff"/><stop offset="1" stop-color="#d4d4d4"/></linearGradient></defs><rect x="0.5" y="0.5" width="12" height="12" rx="1.5" fill="url(#gex)" stroke="#9c9c9c"/><path d="M3 6.5 H10" stroke="#4b5fb4" stroke-width="1.4"/></svg>
<div style="position:absolute;left:18.5px;top:394.3px;width:5px;height:1px;background:repeating-linear-gradient(90deg,#888 0 1px,transparent 1px 2px)"></div>
<svg style="position:absolute;left:24.3px;top:387.1px;" width="12" height="10.5" viewBox="0 0 12 10.5"><path d="M0.5 2.8 L1.8 0.6 H5.2 L6.4 2.2 H11.5 V10 H0.5Z" fill="#f5f07a" stroke="#111" stroke-width="1"/><path d="M0.5 3 H11.5" stroke="#111" stroke-width="0.6"/><rect x="1" y="3.4" width="10" height="6.2" fill="#faf48a"/></svg>
<span class="t" style="left:42.80px;top:384.41px;font-size:20.3px;line-height:20.3px;color:#000;letter-spacing:1.326px;font-family:'Liberation Serif','Noto Serif CJK SC',serif;">Design</span>
<svg style="position:absolute;left:24px;top:411.95px;" width="13" height="13" viewBox="0 0 13 13"><defs><linearGradient id="gex" x1="0" y1="0" x2="1" y2="1"><stop offset="0" stop-color="#fff"/><stop offset="1" stop-color="#d4d4d4"/></linearGradient></defs><rect x="0.5" y="0.5" width="12" height="12" rx="1.5" fill="url(#gex)" stroke="#9c9c9c"/><path d="M3 6.5 H10" stroke="#4b5fb4" stroke-width="1.4"/></svg>
<div style="position:absolute;left:37.5px;top:418.25px;width:5px;height:1px;background:repeating-linear-gradient(90deg,#888 0 1px,transparent 1px 2px)"></div>
<svg style="position:absolute;left:43.3px;top:411.05px;" width="12" height="10.5" viewBox="0 0 12 10.5"><path d="M0.5 2.8 L1.8 0.6 H5.2 L6.4 2.2 H11.5 V10 H0.5Z" fill="#f5f07a" stroke="#111" stroke-width="1"/><path d="M0.5 3 H11.5" stroke="#111" stroke-width="0.6"/><rect x="1" y="3.4" width="10" height="6.2" fill="#faf48a"/></svg>
<span class="t" style="left:61.80px;top:408.36px;font-size:20.3px;line-height:20.3px;color:#000;letter-spacing:0.751px;font-family:'Liberation Serif','Noto Serif CJK SC',serif;">Geometry</span>
<svg style="position:absolute;left:43px;top:435.9px;" width="13" height="13" viewBox="0 0 13 13"><defs><linearGradient id="gex" x1="0" y1="0" x2="1" y2="1"><stop offset="0" stop-color="#fff"/><stop offset="1" stop-color="#d4d4d4"/></linearGradient></defs><rect x="0.5" y="0.5" width="12" height="12" rx="1.5" fill="url(#gex)" stroke="#9c9c9c"/><path d="M3 6.5 H10" stroke="#4b5fb4" stroke-width="1.4"/></svg>
<div style="position:absolute;left:56.5px;top:442.2px;width:5px;height:1px;background:repeating-linear-gradient(90deg,#888 0 1px,transparent 1px 2px)"></div>
<svg style="position:absolute;left:62.3px;top:435.0px;" width="12" height="10.5" viewBox="0 0 12 10.5"><path d="M0.5 2.8 L1.8 0.6 H5.2 L6.4 2.2 H11.5 V10 H0.5Z" fill="#f5f07a" stroke="#111" stroke-width="1"/><path d="M0.5 3 H11.5" stroke="#111" stroke-width="0.6"/><rect x="1" y="3.4" width="10" height="6.2" fill="#faf48a"/></svg>
<span class="t" style="left:80.80px;top:432.31px;font-size:20.3px;line-height:20.3px;color:#000;transform-origin:0 0;transform:scaleX(0.7681);font-family:'Liberation Serif','Noto Serif CJK SC',serif;">BC</span>
<div style="position:absolute;left:68.4px;top:466.15px;width:11px;height:1px;background:repeating-linear-gradient(90deg,#888 0 1px,transparent 1px 2px)"></div>
<svg style="position:absolute;left:79px;top:457.84999999999997px;" width="7" height="8" viewBox="0 0 7 8"><path d="M0.6 4.6 L2.6 6.8 L5.8 0.6" fill="none" stroke="#000" stroke-width="1.9"/></svg>
<svg style="position:absolute;left:86.5px;top:462.54999999999995px;" width="9" height="7" viewBox="0 0 9 7"><path d="M0.6 0.6 H5.5 C7.5 0.6 8.4 2 8.4 3.2 C8.4 4.6 7.5 6 5.5 6 H0.6Z M0.6 3.2 H8" fill="none" stroke="#8c8c8c" stroke-width="1"/></svg>
<span class="t" style="left:100.40px;top:456.26px;font-size:20.3px;line-height:20.3px;color:#000;letter-spacing:-0.816px;font-family:'Liberation Serif','Noto Serif CJK SC',serif;">Cy1</span>
<div style="position:absolute;left:68.4px;top:490.1px;width:11px;height:1px;background:repeating-linear-gradient(90deg,#888 0 1px,transparent 1px 2px)"></div>
<svg style="position:absolute;left:79px;top:481.8px;" width="7" height="8" viewBox="0 0 7 8"><path d="M0.6 4.6 L2.6 6.8 L5.8 0.6" fill="none" stroke="#000" stroke-width="1.9"/></svg>
<svg style="position:absolute;left:86.5px;top:486.5px;" width="9" height="7" viewBox="0 0 9 7"><path d="M0.6 0.6 H5.5 C7.5 0.6 8.4 2 8.4 3.2 C8.4 4.6 7.5 6 5.5 6 H0.6Z M0.6 3.2 H8" fill="none" stroke="#8c8c8c" stroke-width="1"/></svg>
<span class="t" style="left:100.40px;top:480.21px;font-size:20.3px;line-height:20.3px;color:#000;letter-spacing:-0.816px;font-family:'Liberation Serif','Noto Serif CJK SC',serif;">Cy2</span>
<div style="position:absolute;left:68.4px;top:514.05px;width:11px;height:1px;background:repeating-linear-gradient(90deg,#888 0 1px,transparent 1px 2px)"></div>
<svg style="position:absolute;left:79px;top:505.74999999999994px;" width="7" height="8" viewBox="0 0 7 8"><path d="M0.6 4.6 L2.6 6.8 L5.8 0.6" fill="none" stroke="#000" stroke-width="1.9"/></svg>
<svg style="position:absolute;left:86.5px;top:510.44999999999993px;" width="9" height="7" viewBox="0 0 9 7"><path d="M0.6 0.6 H5.5 C7.5 0.6 8.4 2 8.4 3.2 C8.4 4.6 7.5 6 5.5 6 H0.6Z M0.6 3.2 H8" fill="none" stroke="#8c8c8c" stroke-width="1"/></svg>
<span class="t" style="left:100.40px;top:504.16px;font-size:20.3px;line-height:20.3px;color:#000;letter-spacing:-0.360px;font-family:'Liberation Serif','Noto Serif CJK SC',serif;">Eb1</span>
<div style="position:absolute;left:68.4px;top:538.0px;width:11px;height:1px;background:repeating-linear-gradient(90deg,#888 0 1px,transparent 1px 2px)"></div>
<svg style="position:absolute;left:79px;top:529.7px;" width="7" height="8" viewBox="0 0 7 8"><path d="M0.6 4.6 L2.6 6.8 L5.8 0.6" fill="none" stroke="#000" stroke-width="1.9"/></svg>
<svg style="position:absolute;left:86.5px;top:534.4px;" width="9" height="7" viewBox="0 0 9 7"><path d="M0.6 0.6 H5.5 C7.5 0.6 8.4 2 8.4 3.2 C8.4 4.6 7.5 6 5.5 6 H0.6Z M0.6 3.2 H8" fill="none" stroke="#8c8c8c" stroke-width="1"/></svg>
<span class="t" style="left:100.40px;top:528.11px;font-size:20.3px;line-height:20.3px;color:#000;letter-spacing:-0.360px;font-family:'Liberation Serif','Noto Serif CJK SC',serif;">Eb2</span>
<div style="position:absolute;left:68.4px;top:561.95px;width:11px;height:1px;background:repeating-linear-gradient(90deg,#888 0 1px,transparent 1px 2px)"></div>
<svg style="position:absolute;left:79px;top:553.6500000000001px;" width="7" height="8" viewBox="0 0 7 8"><path d="M0.6 4.6 L2.6 6.8 L5.8 0.6" fill="none" stroke="#000" stroke-width="1.9"/></svg>
<svg style="position:absolute;left:86.5px;top:558.35px;" width="9" height="7" viewBox="0 0 9 7"><path d="M0.6 0.6 H5.5 C7.5 0.6 8.4 2 8.4 3.2 C8.4 4.6 7.5 6 5.5 6 H0.6Z M0.6 3.2 H8" fill="none" stroke="#8c8c8c" stroke-width="1"/></svg>
<span class="t" style="left:100.40px;top:552.06px;font-size:20.3px;line-height:20.3px;color:#000;letter-spacing:0.096px;font-family:'Liberation Serif','Noto Serif CJK SC',serif;">Ea1</span>
<div style="position:absolute;left:68.4px;top:585.9px;width:11px;height:1px;background:repeating-linear-gradient(90deg,#888 0 1px,transparent 1px 2px)"></div>
<svg style="position:absolute;left:79px;top:577.6px;" width="7" height="8" viewBox="0 0 7 8"><path d="M0.6 4.6 L2.6 6.8 L5.8 0.6" fill="none" stroke="#000" stroke-width="1.9"/></svg>
<svg style="position:absolute;left:86.5px;top:582.3px;" width="9" height="7" viewBox="0 0 9 7"><path d="M0.6 0.6 H5.5 C7.5 0.6 8.4 2 8.4 3.2 C8.4 4.6 7.5 6 5.5 6 H0.6Z M0.6 3.2 H8" fill="none" stroke="#8c8c8c" stroke-width="1"/></svg>
<span class="t" style="left:100.40px;top:576.01px;font-size:20.3px;line-height:20.3px;color:#000;letter-spacing:0.096px;font-family:'Liberation Serif','Noto Serif CJK SC',serif;">Ea2</span>
<svg style="position:absolute;left:43px;top:603.5500000000001px;" width="13" height="13" viewBox="0 0 13 13"><defs><linearGradient id="gex" x1="0" y1="0" x2="1" y2="1"><stop offset="0" stop-color="#fff"/><stop offset="1" stop-color="#d4d4d4"/></linearGradient></defs><rect x="0.5" y="0.5" width="12" height="12" rx="1.5" fill="url(#gex)" stroke="#9c9c9c"/><path d="M3 6.5 H10" stroke="#4b5fb4" stroke-width="1.4"/></svg>
<div style="position:absolute;left:56.5px;top:609.85px;width:5px;height:1px;background:repeating-linear-gradient(90deg,#888 0 1px,transparent 1px 2px)"></div>
<svg style="position:absolute;left:62.3px;top:602.65px;" width="12" height="10.5" viewBox="0 0 12 10.5"><path d="M0.5 2.8 L1.8 0.6 H5.2 L6.4 2.2 H11.5 V10 H0.5Z" fill="#f5f07a" stroke="#111" stroke-width="1"/><path d="M0.5 3 H11.5" stroke="#111" stroke-width="0.6"/><rect x="1" y="3.4" width="10" height="6.2" fill="#faf48a"/></svg>
<span class="t" style="left:80.80px;top:599.96px;font-size:20.3px;line-height:20.3px;color:#000;transform-origin:0 0;transform:scaleX(0.7376);font-family:'Liberation Serif','Noto Serif CJK SC',serif;">UC</span>
<div style="position:absolute;left:68.4px;top:633.8px;width:11px;height:1px;background:repeating-linear-gradient(90deg,#888 0 1px,transparent 1px 2px)"></div>
<svg style="position:absolute;left:86.5px;top:630.1999999999999px;" width="9" height="7" viewBox="0 0 9 7"><path d="M0.6 0.6 H5.5 C7.5 0.6 8.4 2 8.4 3.2 C8.4 4.6 7.5 6 5.5 6 H0.6Z M0.6 3.2 H8" fill="none" stroke="#8c8c8c" stroke-width="1"/></svg>
<span class="t" style="left:100.40px;top:623.91px;font-size:20.3px;line-height:20.3px;color:#000;letter-spacing:-0.816px;font-family:'Liberation Serif','Noto Serif CJK SC',serif;">Cy1</span>
<div style="position:absolute;left:68.4px;top:657.75px;width:11px;height:1px;background:repeating-linear-gradient(90deg,#888 0 1px,transparent 1px 2px)"></div>
<svg style="position:absolute;left:86.5px;top:654.15px;" width="9" height="7" viewBox="0 0 9 7"><path d="M0.6 0.6 H5.5 C7.5 0.6 8.4 2 8.4 3.2 C8.4 4.6 7.5 6 5.5 6 H0.6Z M0.6 3.2 H8" fill="none" stroke="#8c8c8c" stroke-width="1"/></svg>
<span class="t" style="left:100.40px;top:647.86px;font-size:20.3px;line-height:20.3px;color:#000;letter-spacing:-0.816px;font-family:'Liberation Serif','Noto Serif CJK SC',serif;">Cy2</span>
<div style="position:absolute;left:68.4px;top:681.7px;width:11px;height:1px;background:repeating-linear-gradient(90deg,#888 0 1px,transparent 1px 2px)"></div>
<svg style="position:absolute;left:79px;top:673.4000000000001px;" width="7" height="8" viewBox="0 0 7 8"><path d="M0.6 4.6 L2.6 6.8 L5.8 0.6" fill="none" stroke="#000" stroke-width="1.9"/></svg>
<svg style="position:absolute;left:86.5px;top:678.1px;" width="9" height="7" viewBox="0 0 9 7"><path d="M0.6 0.6 H5.5 C7.5 0.6 8.4 2 8.4 3.2 C8.4 4.6 7.5 6 5.5 6 H0.6Z M0.6 3.2 H8" fill="none" stroke="#8c8c8c" stroke-width="1"/></svg>
<span class="t" style="left:100.40px;top:671.81px;font-size:20.3px;line-height:20.3px;color:#000;letter-spacing:0.096px;font-family:'Liberation Serif','Noto Serif CJK SC',serif;">Ea1</span>
<div style="position:absolute;left:68.4px;top:705.65px;width:11px;height:1px;background:repeating-linear-gradient(90deg,#888 0 1px,transparent 1px 2px)"></div>
<svg style="position:absolute;left:79px;top:697.35px;" width="7" height="8" viewBox="0 0 7 8"><path d="M0.6 4.6 L2.6 6.8 L5.8 0.6" fill="none" stroke="#000" stroke-width="1.9"/></svg>
<svg style="position:absolute;left:86.5px;top:702.05px;" width="9" height="7" viewBox="0 0 9 7"><path d="M0.6 0.6 H5.5 C7.5 0.6 8.4 2 8.4 3.2 C8.4 4.6 7.5 6 5.5 6 H0.6Z M0.6 3.2 H8" fill="none" stroke="#8c8c8c" stroke-width="1"/></svg>
<span class="t" style="left:100.40px;top:695.76px;font-size:20.3px;line-height:20.3px;color:#000;letter-spacing:0.096px;font-family:'Liberation Serif','Noto Serif CJK SC',serif;">Ea2</span>
<div style="position:absolute;left:30.3px;top:406px;width:1px;height:5px;background:repeating-linear-gradient(180deg,#888 0 1px,transparent 1px 2px)"></div>
<div style="position:absolute;left:49.4px;top:430px;width:1px;height:6px;background:repeating-linear-gradient(180deg,#888 0 1px,transparent 1px 2px)"></div>
<div style="position:absolute;left:49.4px;top:449px;width:1px;height:154px;background:repeating-linear-gradient(180deg,#888 0 1px,transparent 1px 2px)"></div>
<div style="position:absolute;left:68.4px;top:455px;width:1px;height:131px;background:repeating-linear-gradient(180deg,#888 0 1px,transparent 1px 2px)"></div>
<div style="position:absolute;left:68.4px;top:622px;width:1px;height:85px;background:repeating-linear-gradient(180deg,#888 0 1px,transparent 1px 2px)"></div>
<div style="position:absolute;left:0px;top:888px;width:276px;height:7px;background:#f0f0f0"></div>
<div style="position:absolute;left:0px;top:895px;width:276px;height:37.5px;background:linear-gradient(90deg,#bccadc,#c9d6e4 60%,#d9e5f1)"></div>
<span class="t" style="left:7.70px;top:905.02px;font-size:21px;line-height:21px;color:#000;letter-spacing:0.620px;">Properties</span>
<svg style="position:absolute;left:223px;top:906.6px;" width="13" height="18" viewBox="0 0 13 18"><path d="M3.2 0.8 H9.8 V9.2 H3.2Z" fill="none" stroke="#111" stroke-width="1.7"/><path d="M7.9 1 V9" stroke="#111" stroke-width="2.2"/><path d="M0.3 9.8 H12.7" stroke="#111" stroke-width="2"/><path d="M6.5 10 V17.5" stroke="#111" stroke-width="1.8"/></svg>
<svg style="position:absolute;left:253.8px;top:908.4px;" width="13" height="13" viewBox="0 0 13 13"><path d="M0.8 0.8 L12 12 M12 0.8 L0.8 12" stroke="#111" stroke-width="2.2"/></svg>
<div style="position:absolute;left:0px;top:932.4px;width:276px;height:48.8px;background:linear-gradient(#a3b1ca 0,#b7c3d8 4px,#c3cee0 100%)"></div>
<div style="position:absolute;left:0px;top:932.4px;width:4px;height:48.8px;background:#9daac4"></div>
<div style="position:absolute;left:9px;top:936.3px;width:275px;height:40.3px;background:#f0f0f0;border:1.3px solid #6f6f6f;box-sizing:border-box"></div>
<div style="position:absolute;left:276px;top:932px;width:8px;height:50px;background:#f0f0f0"></div>
<svg style="position:absolute;left:259.5px;top:952px;" width="13" height="7.2" viewBox="0 0 13 7.2"><path d="M0 0 H13 L6.5 7.2Z" fill="#808080"/></svg>
<div style="position:absolute;left:0px;top:981.2px;width:276px;height:44.5px;background:#f0f0f0"></div>
<div style="position:absolute;left:0.5px;top:981.6px;width:30px;height:29.5px;background:#cce4f9;border:1.2px solid #9dcdf8;border-radius:4px;box-sizing:border-box"></div>
<svg style="position:absolute;left:6px;top:985.5px;" width="22" height="22" viewBox="0 0 22 22"><g fill="none" stroke="#7a7a7a" stroke-width="1"><rect x="1.5" y="1.5" width="7.5" height="7.5" fill="#fff"/><rect x="1.5" y="12.2" width="7.5" height="7.5" fill="#fff"/></g><path d="M5.2 9 V12" stroke="#7a7a7a"/><path d="M3 5.3 H7.5 M5.25 3 V7.5 M3 16 H7.5 M5.25 13.7 V18.2" stroke="#000" stroke-width="1.3"/><path d="M11.5 5 H17" stroke="#111" stroke-width="1.4"/><path d="M11.5 15.8 H15.5" stroke="#111" stroke-width="1.4"/><path d="M13 7.5 H19 M13 10 H19 M13 12.6 H19 M13 18 H19 M17 5 H19 M16.5 15.8H19" stroke="#9a9a9a" stroke-width="1" stroke-dasharray="1.5 1"/></svg>
<span class="t" style="left:39px;top:984.5px;font-size:10.5px;line-height:10px;font-weight:700;color:#000;font-family:'Liberation Mono',monospace">A</span>
<span class="t" style="left:39px;top:995px;font-size:10.5px;line-height:10px;font-weight:700;color:#000;font-family:'Liberation Mono',monospace">Z</span>
<svg style="position:absolute;left:47px;top:986px;" width="8" height="19" viewBox="0 0 8 19"><path d="M4 1 V3" stroke="#00007a" stroke-width="1.6"/><path d="M4 4.5 V13" stroke="#00007a" stroke-width="1.8"/><path d="M0.5 11.5 H7.5 L4 18Z" fill="#00007a"/></svg>
<div style="position:absolute;left:0px;top:1025.5px;width:276px;height:412.5px;background:#fff;border:2px solid #9b9b9b;box-sizing:border-box"></div>
<div style="position:absolute;left:276px;top:345px;width:8px;height:1093px;background:#f0f0f0"></div>
<div style="position:absolute;left:0px;top:1438px;width:2560px;height:50px;background:#9ca9c2"></div>
<div style="position:absolute;left:4px;top:1441px;width:116px;height:46.5px;background:#bcc7da;border-radius:4px;box-shadow:inset 0 1px 0 #cbd4e3"></div>
<div style="position:absolute;left:101px;top:1441px;width:19px;height:46.5px;background:#d4dae8;border-radius:0 4px 4px 0"></div>
<div style="position:absolute;left:12px;top:1448.2px;width:4px;height:4px;background:#7080a0"></div>
<div style="position:absolute;left:12px;top:1456px;width:4px;height:4px;background:#7080a0"></div>
<div style="position:absolute;left:12px;top:1464px;width:4px;height:4px;background:#7080a0"></div>
<div style="position:absolute;left:12px;top:1472px;width:4px;height:4px;background:#7080a0"></div>
<span class="t" style="left:26.00px;top:1454.72px;font-size:21px;line-height:21px;color:#16213f;transform-origin:0 0;transform:scaleX(0.7713);">...</span>
<div style="position:absolute;left:50.8px;top:1447px;width:1.2px;height:33px;background:#7f8ca6"></div>
<svg style="position:absolute;left:64px;top:1450px;" width="26" height="25" viewBox="0 0 26 25"><circle cx="12.7" cy="6.6" r="5.9" fill="#0a86e2"/><path d="M9 10 H16.5 V13.5 C16.5 15 18 15.8 20 16.4 C23 17.3 24.6 18.5 24.6 21 V24.6 H0.6 V21 C0.6 18.5 2.2 17.3 5.2 16.4 C7.2 15.8 9 15 9 13.5Z" fill="#0a86e2"/></svg>
<svg style="position:absolute;left:101.5px;top:1471.5px;" width="16" height="14" viewBox="0 0 16 14"><g transform="translate(8,6)"><path d="M-4 1 H6 L1 6Z" fill="#fff"/><path d="M-5 -3 H5" stroke="#fff" stroke-width="1.6" transform="translate(1,1)"/><path d="M-5 0 H5 L0 5Z" fill="#111a2e"/><path d="M-5 -3.2 H5" stroke="#111a2e" stroke-width="1.6"/></g></svg>
<div style="position:absolute;left:0px;top:1488px;width:2560px;height:30px;background:#f0f0f0"></div>
<div style="position:absolute;left:0px;top:1516px;width:2560px;height:2px;background:#3e4d57"></div>
<span class="t" style="left:3.40px;top:1493.00px;font-size:21.5px;line-height:21.5px;color:#000;letter-spacing:-0.367px;">Ready</span>
<span class="t" style="left:1888.50px;top:1493.20px;font-size:21.5px;line-height:21.5px;color:#000;letter-spacing:0.798px;">C:\Users\Ncs\Documents\Untitled.msd*</span>
<div style="position:absolute;left:2306.3px;top:1490px;width:1.2px;height:25px;background:#d0d0d0"></div>
<div style="position:absolute;left:2367.8px;top:1490px;width:1.2px;height:25px;background:#d0d0d0"></div>
<span class="t" style="left:2311.70px;top:1493.20px;font-size:21.5px;line-height:21.5px;color:#000;letter-spacing:0.934px;">NUM</span>
<span class="t" style="left:2373.70px;top:1493.20px;font-size:21.5px;line-height:21.5px;color:#000;letter-spacing:-0.094px;">Object Snap: OFF</span>
<div style="position:absolute;left:284px;top:347px;width:2276px;height:1091px;background:#f0f0f0"></div>
<div style="position:absolute;left:283.4px;top:345.2px;width:1.8px;height:1092.8px;background:#7a7a7a"></div>
<div style="position:absolute;left:283.4px;top:345.2px;width:2276.6px;height:2.1px;background:#7a7a7a"></div>
<svg style="position:absolute;left:0px;top:0px;pointer-events:none" width="2560" height="1518" viewBox="0 0 2560 1518"><rect x="295.4" y="403.04" width="3.6" height="1.2" fill="#000"/><rect x="2543.5" y="403.04" width="4" height="1.2" fill="#000"/><rect x="295.4" y="446.73" width="3.6" height="1.2" fill="#000"/><rect x="2543.5" y="446.73" width="4" height="1.2" fill="#000"/><rect x="291.8" y="490.41" width="7.2" height="1.2" fill="#000"/><rect x="2543.5" y="490.41" width="8" height="1.2" fill="#000"/><rect x="295.4" y="534.10" width="3.6" height="1.2" fill="#000"/><rect x="2543.5" y="534.10" width="4" height="1.2" fill="#000"/><rect x="295.4" y="577.79" width="3.6" height="1.2" fill="#000"/><rect x="2543.5" y="577.79" width="4" height="1.2" fill="#000"/><rect x="293.4" y="621.48" width="5.6" height="1.2" fill="#000"/><rect x="2543.5" y="621.48" width="4" height="1.2" fill="#000"/><rect x="295.4" y="665.16" width="3.6" height="1.2" fill="#000"/><rect x="2543.5" y="665.16" width="4" height="1.2" fill="#000"/><rect x="295.4" y="708.85" width="3.6" height="1.2" fill="#000"/><rect x="2543.5" y="708.85" width="4" height="1.2" fill="#000"/><rect x="291.8" y="752.54" width="7.2" height="1.2" fill="#000"/><rect x="2543.5" y="752.54" width="8" height="1.2" fill="#000"/><rect x="295.4" y="796.23" width="3.6" height="1.2" fill="#000"/><rect x="2543.5" y="796.23" width="4" height="1.2" fill="#000"/><rect x="295.4" y="839.91" width="3.6" height="1.2" fill="#000"/><rect x="2543.5" y="839.91" width="4" height="1.2" fill="#000"/><rect x="293.4" y="883.60" width="5.6" height="1.2" fill="#000"/><rect x="2543.5" y="883.60" width="8.5" height="1.2" fill="#000"/><rect x="295.4" y="927.29" width="3.6" height="1.2" fill="#000"/><rect x="2543.5" y="927.29" width="4" height="1.2" fill="#000"/><rect x="295.4" y="970.98" width="3.6" height="1.2" fill="#000"/><rect x="2543.5" y="970.98" width="4" height="1.2" fill="#000"/><rect x="291.8" y="1014.66" width="7.2" height="1.2" fill="#000"/><rect x="2543.5" y="1014.66" width="8" height="1.2" fill="#000"/><rect x="295.4" y="1058.35" width="3.6" height="1.2" fill="#000"/><rect x="2543.5" y="1058.35" width="4" height="1.2" fill="#000"/><rect x="295.4" y="1102.04" width="3.6" height="1.2" fill="#000"/><rect x="2543.5" y="1102.04" width="4" height="1.2" fill="#000"/><rect x="293.4" y="1145.73" width="5.6" height="1.2" fill="#000"/><rect x="2543.5" y="1145.73" width="4" height="1.2" fill="#000"/><rect x="295.4" y="1189.41" width="3.6" height="1.2" fill="#000"/><rect x="2543.5" y="1189.41" width="4" height="1.2" fill="#000"/><rect x="295.4" y="1233.10" width="3.6" height="1.2" fill="#000"/><rect x="2543.5" y="1233.10" width="4" height="1.2" fill="#000"/><rect x="291.8" y="1276.79" width="7.2" height="1.2" fill="#000"/><rect x="2543.5" y="1276.79" width="8" height="1.2" fill="#000"/><rect x="295.4" y="1320.48" width="3.6" height="1.2" fill="#000"/><rect x="2543.5" y="1320.48" width="4" height="1.2" fill="#000"/><rect x="295.4" y="1364.16" width="3.6" height="1.2" fill="#000"/><rect x="2543.5" y="1364.16" width="4" height="1.2" fill="#000"/><rect x="298.70" y="1422.3" width="1.2" height="5.4" fill="#000"/><rect x="390.82" y="1422.3" width="1.2" height="3.7" fill="#000"/><rect x="483.75" y="1422.3" width="1.2" height="3.7" fill="#000"/><rect x="576.67" y="1422.3" width="1.2" height="7.6" fill="#000"/><rect x="669.60" y="1422.3" width="1.2" height="3.7" fill="#000"/><rect x="762.52" y="1422.3" width="1.2" height="3.7" fill="#000"/><rect x="855.45" y="1422.3" width="1.2" height="5.4" fill="#000"/><rect x="948.37" y="1422.3" width="1.2" height="3.7" fill="#000"/><rect x="1041.30" y="1422.3" width="1.2" height="3.7" fill="#000"/><rect x="1134.22" y="1422.3" width="1.2" height="7.6" fill="#000"/><rect x="1227.15" y="1422.3" width="1.2" height="3.7" fill="#000"/><rect x="1320.08" y="1422.3" width="1.2" height="3.7" fill="#000"/><rect x="1413.00" y="1422.3" width="1.2" height="5.4" fill="#000"/><rect x="1505.92" y="1422.3" width="1.2" height="3.7" fill="#000"/><rect x="1598.85" y="1422.3" width="1.2" height="3.7" fill="#000"/><rect x="1691.78" y="1422.3" width="1.2" height="7.6" fill="#000"/><rect x="1784.70" y="1422.3" width="1.2" height="3.7" fill="#000"/><rect x="1877.62" y="1422.3" width="1.2" height="3.7" fill="#000"/><rect x="1970.55" y="1422.3" width="1.2" height="5.4" fill="#000"/><rect x="2063.47" y="1422.3" width="1.2" height="3.7" fill="#000"/><rect x="2156.40" y="1422.3" width="1.2" height="3.7" fill="#000"/><rect x="2249.33" y="1422.3" width="1.2" height="7.6" fill="#000"/><rect x="2342.25" y="1422.3" width="1.2" height="3.7" fill="#000"/><rect x="2435.18" y="1422.3" width="1.2" height="3.7" fill="#000"/><rect x="2528.10" y="1422.3" width="1.2" height="5.4" fill="#000"/></svg>
<span class="t" style="left:286.8px;top:357.33px;font-size:8.2px;line-height:8.2px;color:#1a1a1a;letter-spacing:-0.35px">-180</span>
<span class="t" style="left:286.8px;top:618.03px;font-size:8.2px;line-height:8.2px;color:#1a1a1a;letter-spacing:-0.35px">-90</span>
<span class="t" style="left:286.5px;top:881.53px;font-size:8.2px;line-height:8.2px;color:#1a1a1a;letter-spacing:-0.35px">0</span>
<span class="t" style="left:286.5px;top:1143.33px;font-size:8.2px;line-height:8.2px;color:#1a1a1a;letter-spacing:-0.35px">90</span>
<span class="t" style="left:286px;top:1404.03px;font-size:8.2px;line-height:8.2px;color:#1a1a1a;letter-spacing:-0.35px">180</span>
<span class="t" style="left:2549px;top:357.33px;font-size:8.2px;line-height:8.2px;color:#1a1a1a;letter-spacing:-0.35px">180</span>
<span class="t" style="left:2549px;top:618.03px;font-size:8.2px;line-height:8.2px;color:#1a1a1a;letter-spacing:-0.35px">-90</span>
<span class="t" style="left:2553.5px;top:881.03px;font-size:8.2px;line-height:8.2px;color:#1a1a1a;letter-spacing:-0.35px">0</span>
<span class="t" style="left:2550.5px;top:1143.33px;font-size:8.2px;line-height:8.2px;color:#1a1a1a;letter-spacing:-0.35px">90</span>
<span class="t" style="left:2546.5px;top:1404.53px;font-size:8.2px;line-height:8.2px;color:#1a1a1a;letter-spacing:-0.35px">180</span>
<span class="t" style="left:291.3px;top:1429.03px;font-size:8.2px;line-height:8.2px;color:#1a1a1a;letter-spacing:-0.35px">-180</span>
<span class="t" style="left:851px;top:1428.53px;font-size:8.2px;line-height:8.2px;color:#1a1a1a;letter-spacing:-0.35px">-90</span>
<span class="t" style="left:1411px;top:1428.53px;font-size:8.2px;line-height:8.2px;color:#1a1a1a;letter-spacing:-0.35px">0 Yaw</span>
<span class="t" style="left:1967.5px;top:1428.53px;font-size:8.2px;line-height:8.2px;color:#1a1a1a;letter-spacing:-0.35px">90</span>
<span class="t" style="left:2524px;top:1428.53px;font-size:8.2px;line-height:8.2px;color:#1a1a1a;letter-spacing:-0.35px">180</span>
<span class="t" style="left:286.6px;top:880px;font-size:8px;line-height:8px;color:#000;transform-origin:0 0;transform:rotate(-90deg)">Pitch</span>
<span class="t" style="left:2546.6px;top:880.5px;font-size:8px;line-height:8px;color:#000;transform-origin:0 0;transform:rotate(-90deg)">Roll</span>
<div style="position:absolute;left:287.6px;top:939.4px;width:11px;height:8px;background:#fff;border:1px solid #c9c9c9;border-radius:4px;box-sizing:border-box;border-right:1.5px solid #1b87e6"></div>
<div style="position:absolute;left:2546.4px;top:959px;width:11.6px;height:9px;background:#fff;border:1px solid #c9c9c9;border-radius:4px;box-sizing:border-box;border-right:1.5px solid #1b87e6"></div>
<div style="position:absolute;left:1062px;top:1425.6px;width:8.8px;height:10.4px;background:#fff;border:1px solid #c9c9c9;border-radius:4px 4px 1px 1px;box-sizing:border-box;border-bottom:1.5px solid #1b87e6"></div>
<div style="position:absolute;left:284px;top:1438px;width:2276px;height:1.1px;background:#fff"></div>
<div style="position:absolute;left:299px;top:1422.3px;width:2244.5px;height:1.6px;background:#fafafa"></div>
<div style="position:absolute;left:2543.5px;top:1422.3px;width:14.3px;height:14.6px;background:#000"></div>
<svg style="position:absolute;left:0px;top:0px;pointer-events:none" width="2560" height="1518" viewBox="0 0 2560 1518"><defs>
<linearGradient id="wallR" gradientUnits="userSpaceOnUse" x1="1028" y1="0" x2="1836" y2="0">
<stop offset="0" stop-color="#3d2f09"/><stop offset="0.2" stop-color="#45370b"/><stop offset="0.45" stop-color="#52430e"/><stop offset="0.6" stop-color="#4d3e0d"/><stop offset="0.78" stop-color="#3f320a"/><stop offset="0.93" stop-color="#2e2408"/><stop offset="1" stop-color="#1b1405"/></linearGradient>
<linearGradient id="wallL" gradientUnits="userSpaceOnUse" x1="942" y1="0" x2="1030" y2="0">
<stop offset="0" stop-color="#141906"/><stop offset="0.15" stop-color="#1a2007"/><stop offset="0.55" stop-color="#1f2908"/><stop offset="1" stop-color="#27310a"/></linearGradient>
<linearGradient id="wallIn" gradientUnits="userSpaceOnUse" x1="1168" y1="0" x2="1617" y2="0">
<stop offset="0" stop-color="#2a360a"/><stop offset="0.2" stop-color="#303f0a"/><stop offset="0.5" stop-color="#36460a"/><stop offset="0.8" stop-color="#34420b"/><stop offset="1" stop-color="#2f350b"/></linearGradient>
<clipPath id="cpHole"><ellipse cx="1392.4" cy="897" rx="224.8" ry="119.6"/></clipPath>
<clipPath id="cpView"><rect x="299" y="347" width="2244.5" height="1075.3"/></clipPath>
</defs><g clip-path="url(#cpView)"><rect x="299" y="347" width="2244.5" height="1075.3" fill="#000"/><g fill="none" stroke-width="1.5"><path d="M1725 750.3 L1209.5 444.5 L539.7 684.2 L1024.5 1048.7" stroke="#5b5a14"/><path d="M1725 750.3 L2371 1130 L1819 1423 M1420 1344.5 L1523.5 1423" stroke="#5e7a14"/><path d="M2345 1324.4 L1212 614.5 L559 862.4 L1267 1423" stroke="#5e7a14"/><path d="M2345 1324.4 L2166 1423" stroke="#5e7a14"/></g><path d="M942.6 912 L951.5 1096.7 A441 247 0 0 0 1833.5 1096.7 L1841.5 912 A449.6 239.2 0 0 1 942.6 912Z" fill="url(#wallR)"/><path d="M942.6 912 L951.5 1096.7 A441 247 0 0 0 1032.6 1239.4 L1024.5 1047.8 A449.6 239.2 0 0 1 942.6 912Z" fill="url(#wallL)"/><ellipse cx="1392" cy="910" rx="449.6" ry="239.2" fill="#25380a"/><clipPath id="cpTop"><ellipse cx="1392" cy="910" rx="449.6" ry="239.2"/></clipPath><path clip-path="url(#cpTop)" d="M1024.5 1048.7 L1725 750.3 L1900 600 L900 600 L900 1100Z" fill="#262506"/><g clip-path="url(#cpHole)"><rect x="1160" y="770" width="470" height="260" fill="url(#wallIn)"/><ellipse cx="1392.5" cy="1096.7" rx="441" ry="247" fill="#25380a"/><ellipse cx="1392.5" cy="1096.7" rx="441" ry="247" fill="none" stroke="#fff" stroke-width="2.2"/><path d="M1563.9 818.6 L1211.7 969.2" stroke="#5a5210" stroke-width="1.4" opacity="0.85"/></g><path d="M1024.5 1048.7 L1420 1344.5" stroke="#5a7a12" stroke-width="1.5"/><path d="M945.5 989.2 L1024.5 1048.7" stroke="#55580f" stroke-width="1.4" opacity="0.9"/><path d="M1003 1213.8 L1072 1268.5" stroke="#5a7a12" stroke-width="1.3" opacity="0.8"/><path d="M1683 724 L1725 749" stroke="#4a4a10" stroke-width="1.2"/><g fill="none" stroke="#fff" stroke-width="2.7"><ellipse cx="1392" cy="910" rx="449.6" ry="239.2"/><path d="M1024.5 1047.8 L1032.6 1239.4"/><path d="M1024.5 1048.7 L1211.7 969.2 M1563.9 818.6 L1725 750.3"/></g><g fill="none" stroke="#fff" stroke-width="2.2"><path d="M951 1084 L951.5 1096.7 A441 247 0 0 0 1833.5 1096.7 L1834 1084"/></g><g fill="none" stroke="#fff" stroke-width="1" opacity="0.35"><path d="M944 940 L951 1084 M1840 940 L1834 1084"/></g><ellipse cx="1392.4" cy="897" rx="224.8" ry="119.6" fill="none" stroke="#fdfbd0" stroke-width="2.1"/><rect x="1388.8" y="889.2" width="6.6" height="6.6" fill="#000"/><rect x="1390.6" y="891" width="3" height="3" fill="#e070d0"/><rect x="1207.9" y="442.9" width="3.2" height="3.2" fill="#f4f4c0"/><rect x="538.1" y="682.6" width="3.2" height="3.2" fill="#f4f4c0"/><rect x="2369.4" y="1128.4" width="3.2" height="3.2" fill="#f4f4c0"/><rect x="1210.4" y="612.9" width="3.2" height="3.2" fill="#f4f4c0"/><rect x="557.4" y="860.8" width="3.2" height="3.2" fill="#f4f4c0"/><rect x="2343.4" y="1322.8000000000002" width="3.2" height="3.2" fill="#f4f4c0"/><defs>
<linearGradient id="axBc" gradientUnits="userSpaceOnUse" x1="2443" y1="0" x2="2475" y2="0"><stop offset="0" stop-color="#00004e"/><stop offset="0.5" stop-color="#00008e"/><stop offset="1" stop-color="#00004e"/></linearGradient>
<linearGradient id="axBs" gradientUnits="userSpaceOnUse" x1="2450" y1="0" x2="2468" y2="0"><stop offset="0" stop-color="#00006e"/><stop offset="0.5" stop-color="#0000a2"/><stop offset="1" stop-color="#000074"/></linearGradient>
<linearGradient id="axRs" gradientUnits="userSpaceOnUse" x1="2474" y1="1318" x2="2482" y2="1340"><stop offset="0" stop-color="#4e0000"/><stop offset="0.5" stop-color="#9a0000"/><stop offset="1" stop-color="#6a0000"/></linearGradient>
<linearGradient id="axRc" gradientUnits="userSpaceOnUse" x1="2500" y1="1306" x2="2508" y2="1338"><stop offset="0" stop-color="#8e0000"/><stop offset="0.45" stop-color="#c20000"/><stop offset="1" stop-color="#7a0000"/></linearGradient>
<linearGradient id="axGs" gradientUnits="userSpaceOnUse" x1="2446" y1="1318" x2="2436" y2="1334"><stop offset="0" stop-color="#27422a"/><stop offset="0.5" stop-color="#4d734f"/><stop offset="1" stop-color="#2f4e31"/></linearGradient>
</defs>
<path d="M2410 1304.2 L2437.2 1304.2 L2440.1 1306.2 L2442.1 1310.8 L2441.8 1316 L2431.2 1329.7 L2427.5 1331.7 L2421.2 1331.7 L2417.2 1326.9Z" fill="#588c5a"/>
<ellipse cx="2431" cy="1318.3" rx="12.2" ry="9.6" transform="rotate(-42 2431 1318.3)" fill="#5e9561"/>
<path d="M2429.8 1310.2 L2452 1322.7 L2458 1345.5 L2455 1346.2 L2423.5 1322.8 A7.5 7.5 0 0 1 2429.8 1310.2Z" fill="url(#axGs)"/>
<path d="M2452 1342 L2455.2 1346.3 L2458.5 1345.4 L2457 1341Z" fill="#5a8f5c"/>
<ellipse cx="2495.1" cy="1321.9" rx="15.6" ry="7.4" transform="rotate(64 2495.1 1321.9)" fill="#6c0000"/>
<path d="M2489.6 1307.4 L2520 1311.1 L2500.6 1336.9 A15.6 7.4 64 0 0 2489.6 1307.4Z" fill="url(#axRc)"/>
<path d="M2467.9 1324.6 L2489.3 1314.8 Q2497 1322 2496.8 1333.2 L2464.1 1345.4 L2459.6 1344.6 L2466 1337Z" fill="url(#axRs)"/>
<path d="M2450.1 1303 H2467.9 V1337 Q2466 1342.9 2459 1342.9 Q2452 1342.9 2450.1 1337Z" fill="url(#axBs)"/>
<path d="M2459.3 1272.7 L2474.7 1298.8 Q2474.9 1301 2471.6 1303.9 Q2459 1308.5 2445.8 1303.9 Q2443 1301 2443.2 1299.4Z" fill="url(#axBc)"/></g></svg>
</body></html>
